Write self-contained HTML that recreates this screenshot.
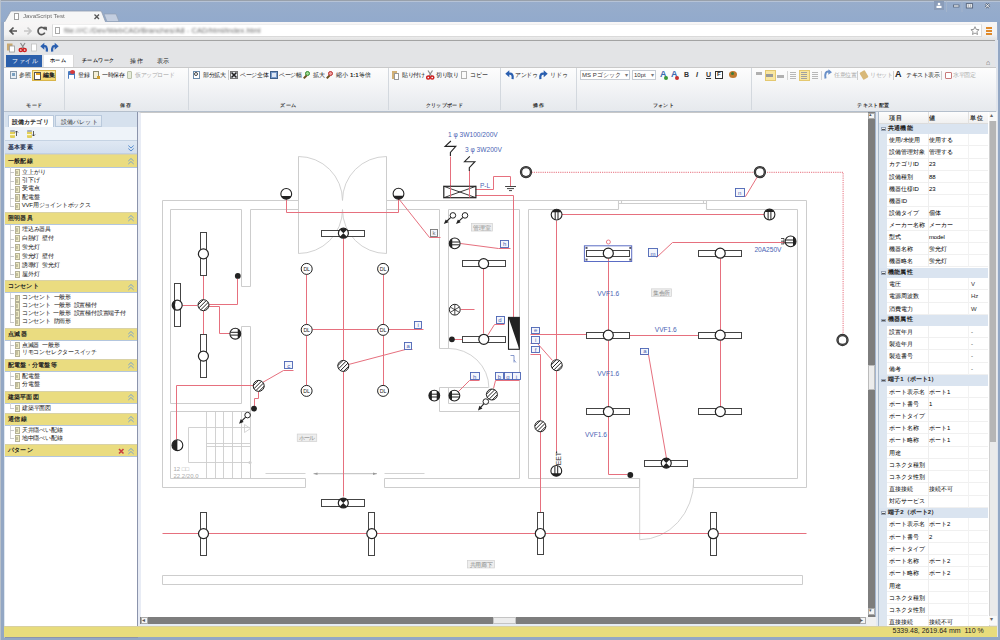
<!DOCTYPE html><html><head><meta charset="utf-8"><style>
html,body{margin:0;padding:0;width:1000px;height:640px;overflow:hidden;background:#fff;}
body{position:relative;font-family:"Liberation Sans", sans-serif;}
div{box-sizing:border-box;}
</style></head><body>
<div style="position:absolute;left:0px;top:0px;width:1000px;height:640px;background:linear-gradient(#98adcb 0px,#92aacc 22px,#a3b5cf 40px,#a3b5cf 640px);"></div>
<div style="position:absolute;left:0px;top:0px;width:1000px;height:1px;background:#98a0aa;"></div>
<div style="position:absolute;left:0px;top:1px;width:1000px;height:1px;background:#b6c3d6;"></div>
<div style="position:absolute;left:0px;top:0px;width:1px;height:640px;background:#b8c0ca;"></div>
<div style="position:absolute;left:1px;top:22px;width:3px;height:618px;background:#93a7c4;"></div>
<div style="position:absolute;left:997.5px;top:22px;width:2.5px;height:618px;background:#93a7c4;"></div>
<div style="position:absolute;left:1px;top:637px;width:999px;height:3px;background:#93a7c4;"></div>
<div style="position:absolute;left:933.6px;top:1px;width:10.8px;height:8.5px;background:#8a9cb8;"></div>
<svg style="position:absolute;left:920px;top:0" width="80" height="14"><circle cx="19" cy="4" r="1.3" fill="#fff"/><rect x="16.5" y="5.8" width="5" height="2.2" fill="#fff"/><path d="M26.5 1 V12 M42 1 V12" stroke="#a9b8cc" stroke-width="0.7"/><rect x="33.5" y="5" width="5.5" height="2" fill="#fff" stroke="#56647a" stroke-width="0.8"/><rect x="46.3" y="3.6" width="6.3" height="4.4" fill="#e6eaf0" stroke="#56647a" stroke-width="0.9"/><path d="M48.3 4.5 V7.3 M50.6 4.5 V7.3" stroke="#888" stroke-width="0.6"/><path d="M65.5 3.8 L69.5 7.8 M69.5 3.8 L65.5 7.8" stroke="#56647a" stroke-width="2.2"/><path d="M65.5 3.8 L69.5 7.8 M69.5 3.8 L65.5 7.8" stroke="#fff" stroke-width="1"/></svg>
<svg style="position:absolute;left:0;top:0" width="130" height="24"><path d="M4 23 L10.5 11.5 Q11 11 12 11 L100 11 Q101 11 101.5 11.5 L106 23 Z" fill="#f6f6f6" stroke="#8f9cb0" stroke-width="0.8"/><path d="M104 14 L116 14 L119 21.5 L107 21.5 Z" fill="#c3cee0" stroke="#8f9cb0" stroke-width="0.6"/></svg>
<div style="position:absolute;left:14px;top:13px;width:5px;height:7px;border:1px solid #a0a0a0;background:#fff;"></div>
<div style="position:absolute;left:23px;top:12.3px;font-size:6.2px;line-height:8.2px;color:#6a6a6a;white-space:nowrap;filter:blur(0.7px);">JavaScript Test</div>
<svg style="position:absolute;left:93px;top:13px" width="8" height="8"><path d="M1.5 1.5 L6 6 M6 1.5 L1.5 6" stroke="#555" stroke-width="1.3"/></svg>
<div style="position:absolute;left:4px;top:22px;width:993.3px;height:18px;background:linear-gradient(#f8f6f6,#f2f2f2 70%,#e2e2e2);"></div>
<div style="position:absolute;left:4px;top:39.5px;width:992px;height:1.2px;background:#a3a3a3;"></div>
<svg style="position:absolute;left:0;top:22px" width="50" height="18"><path d="M10 9 H17 M13.5 5.5 L10 9 L13.5 12.5" fill="none" stroke="#555" stroke-width="1.7"/><path d="M24 9 H31 M27.5 5.5 L31 9 L27.5 12.5" fill="none" stroke="#c6c6c6" stroke-width="1.7"/><path d="M44.8 7.3 A3.6 3.6 0 1 0 44.8 10.7" fill="none" stroke="#555" stroke-width="1.7"/><path d="M43.5 5.2 L46.5 5.2 L46.5 8.2 Z" fill="#555" stroke="#555" stroke-width="0.8"/></svg>
<div style="position:absolute;left:52px;top:24.3px;width:930px;height:12.7px;background:#fff;border:1px solid #dadada;border-top-color:#eee;"></div>
<div style="position:absolute;left:55px;top:27px;width:5px;height:7px;border:1px solid #a8a8a8;background:#fff;"></div>
<div style="position:absolute;left:64px;top:25.5px;font-size:7.4px;line-height:9.4px;color:#6a6a6a;white-space:nowrap;filter:blur(1.1px);letter-spacing:0.1px;">file:///C:/Dev/WebCAD/Branches/A8 - CAD/html/index.html</div>
<svg style="position:absolute;left:969.7px;top:26px" width="10" height="10"><polygon points="5.00,0.70 6.18,3.38 9.09,3.67 6.90,5.62 7.53,8.48 5.00,7.00 2.47,8.48 3.10,5.62 0.91,3.67 3.82,3.38" fill="#fff" stroke="#8a8a8a" stroke-width="0.9"/></svg>
<div style="position:absolute;left:986px;top:27px;width:6px;height:2px;background:#e08a2a;"></div>
<div style="position:absolute;left:986px;top:30px;width:6px;height:2px;background:#e08a2a;"></div>
<div style="position:absolute;left:986px;top:33px;width:6px;height:2px;background:#e08a2a;"></div>
<div style="position:absolute;left:995px;top:40px;width:2.5px;height:597px;background:#dfe4ec;"></div>
<div style="position:absolute;left:4px;top:40.5px;width:991px;height:26px;background:#e3e4e6;"></div>
<svg style="position:absolute;left:0;top:38px" width="70" height="18"><rect x="7" y="5.5" width="5.5" height="7" fill="#c9a870"/><rect x="9.5" y="8" width="5" height="6" fill="#fff" stroke="#9a9a9a" stroke-width="0.8"/><path d="M20.5 5 L24 10.5 M25 5 L21.5 10.5" stroke="#8a8a8a" stroke-width="1.2"/><circle cx="20.8" cy="12" r="1.6" fill="none" stroke="#d02020" stroke-width="1.5"/><circle cx="24.6" cy="12" r="1.6" fill="none" stroke="#d02020" stroke-width="1.5"/><rect x="31.5" y="6" width="5" height="7" fill="#fff" stroke="#c0c0c0" stroke-width="0.8"/><path d="M43.5 8.3 Q47.5 7 46.8 13.7" fill="none" stroke="#2a5fb0" stroke-width="2.2"/><path d="M40.3 8.3 L44.3 4.8 L44.3 11.8 Z" fill="#2a5fb0"/><path d="M55.5 8.3 Q51.5 7 52.2 13.7" fill="none" stroke="#2a5fb0" stroke-width="2.2"/><path d="M58.7 8.3 L54.7 4.8 L54.7 11.8 Z" fill="#2a5fb0"/></svg>
<div style="position:absolute;left:6px;top:55px;width:36px;height:11.5px;background:#2b5fab;"></div>
<div class="j" style="position:absolute;left:12px;top:56.5px;font-size:6px;line-height:8px;color:#fff;white-space:nowrap;letter-spacing:0.5px;width:26.5px;text-align:justify;text-align-last:justify;">ファイル</div>
<div style="position:absolute;left:43.5px;top:55px;width:30px;height:12px;background:#fff;border-right:1px solid #d8d8d8;"></div>
<div class="j" style="position:absolute;left:50px;top:56.5px;font-size:5px;line-height:7px;color:#111;white-space:nowrap;letter-spacing:0.2px;font-weight:bold;width:16.1px;text-align:justify;text-align-last:justify;">ホーム</div>
<div class="j" style="position:absolute;left:82px;top:56.5px;font-size:5px;line-height:7px;color:#111;white-space:nowrap;letter-spacing:0.35px;font-weight:bold;width:32.6px;text-align:justify;text-align-last:justify;">チームワーク</div>
<div class="j" style="position:absolute;left:130px;top:56.5px;font-size:6px;line-height:8px;color:#111;white-space:nowrap;width:12.5px;text-align:justify;text-align-last:justify;">操作</div>
<div class="j" style="position:absolute;left:156.5px;top:56.5px;font-size:6px;line-height:8px;color:#111;white-space:nowrap;letter-spacing:-0.5px;width:11.5px;text-align:justify;text-align-last:justify;">表示</div>
<div style="position:absolute;left:986px;top:58px;font-size:7px;line-height:9px;color:#666;white-space:nowrap;">⌂</div>
<div style="position:absolute;left:4px;top:66.5px;width:991.5px;height:45px;background:linear-gradient(#fdfdfd 0%,#f3f4f6 45%,#e6e9ed 100%);border-top:1px solid #c9c9c9;border-bottom:1px solid #b4bfcc;"></div>
<div style="position:absolute;left:63.5px;top:68px;width:1px;height:42px;background:#d3d8de;"></div>
<div style="position:absolute;left:187.5px;top:68px;width:1px;height:42px;background:#d3d8de;"></div>
<div style="position:absolute;left:387.5px;top:68px;width:1px;height:42px;background:#d3d8de;"></div>
<div style="position:absolute;left:500px;top:68px;width:1px;height:42px;background:#d3d8de;"></div>
<div style="position:absolute;left:576px;top:68px;width:1px;height:42px;background:#d3d8de;"></div>
<div style="position:absolute;left:750.5px;top:68px;width:1px;height:42px;background:#d3d8de;"></div>
<div class="j" style="position:absolute;left:26.125px;top:101.5px;font-size:5px;line-height:7px;color:#333;white-space:nowrap;;font-weight:bold;letter-spacing:0.25px;width:16.2px;text-align:justify;text-align-last:justify;">モード</div>
<div class="j" style="position:absolute;left:119.75px;top:101.5px;font-size:5px;line-height:7px;color:#333;white-space:nowrap;;font-weight:bold;letter-spacing:0.25px;width:11.0px;text-align:justify;text-align-last:justify;">保存</div>
<div class="j" style="position:absolute;left:280.125px;top:101.5px;font-size:5px;line-height:7px;color:#333;white-space:nowrap;;font-weight:bold;letter-spacing:0.25px;width:16.2px;text-align:justify;text-align-last:justify;">ズーム</div>
<div class="j" style="position:absolute;left:425.625px;top:101.5px;font-size:5px;line-height:7px;color:#333;white-space:nowrap;;font-weight:bold;letter-spacing:0.25px;width:37.2px;text-align:justify;text-align-last:justify;">クリップボード</div>
<div class="j" style="position:absolute;left:532.75px;top:101.5px;font-size:5px;line-height:7px;color:#333;white-space:nowrap;;font-weight:bold;letter-spacing:0.25px;width:11.0px;text-align:justify;text-align-last:justify;">操作</div>
<div class="j" style="position:absolute;left:652.5px;top:101.5px;font-size:5px;line-height:7px;color:#333;white-space:nowrap;;font-weight:bold;letter-spacing:0.25px;width:21.5px;text-align:justify;text-align-last:justify;">フォント</div>
<div class="j" style="position:absolute;left:857.25px;top:101.5px;font-size:5px;line-height:7px;color:#333;white-space:nowrap;;font-weight:bold;letter-spacing:0.25px;width:32.0px;text-align:justify;text-align-last:justify;">テキスト配置</div>
<div style="position:absolute;left:10px;top:71px;width:7px;height:8px;background:#e8eef4;border:1px solid #8a9aaa;"></div>
<div style="position:absolute;left:12px;top:73px;width:3px;height:3px;background:#7aa0c0;"></div>
<div class="j" style="position:absolute;left:19px;top:70.5px;font-size:6px;line-height:8px;color:#111;white-space:nowrap;letter-spacing:-0.5px;width:11.5px;text-align:justify;text-align-last:justify;">参照</div>
<div style="position:absolute;left:32px;top:70px;width:24px;height:11px;background:linear-gradient(#fbe9a0,#f2d56a);border:1px solid #d9b54a;"></div>
<div style="position:absolute;left:34px;top:71.5px;width:7px;height:8px;background:#fff;border:1px solid #555;"></div>
<div style="position:absolute;left:36px;top:73px;width:4px;height:2px;background:#e0a020;"></div>
<div class="j" style="position:absolute;left:43px;top:70.5px;font-size:6px;line-height:8px;color:#222;white-space:nowrap;letter-spacing:-0.5px;font-weight:bold;width:11.5px;text-align:justify;text-align-last:justify;">編集</div>
<div style="position:absolute;left:68px;top:71px;width:7px;height:8px;background:#4a7bc0;border-radius:1px;"></div>
<div style="position:absolute;left:70px;top:70px;width:5px;height:4px;background:#d83a3a;border-radius:50%;"></div>
<div style="position:absolute;left:69px;top:75px;width:5px;height:4px;background:#fff;"></div>
<div class="j" style="position:absolute;left:78px;top:70.5px;font-size:6px;line-height:8px;color:#111;white-space:nowrap;letter-spacing:-0.5px;width:11.5px;text-align:justify;text-align-last:justify;">登録</div>
<div style="position:absolute;left:93px;top:71px;width:6px;height:8px;background:#f5f0d8;border:1px solid #8a8a70;"></div>
<div style="position:absolute;left:97px;top:76px;width:3px;height:3px;background:#d0a030;"></div>
<div class="j" style="position:absolute;left:102px;top:70.5px;font-size:6px;line-height:8px;color:#111;white-space:nowrap;letter-spacing:-0.5px;width:22.5px;text-align:justify;text-align-last:justify;">一時保存</div>
<div style="position:absolute;left:127px;top:71px;width:5px;height:8px;background:#e6ecd8;border:1px solid #b8c0a8;border-radius:1px;"></div>
<div class="j" style="position:absolute;left:135px;top:70.5px;font-size:6px;line-height:8px;color:#a8a8a8;white-space:nowrap;letter-spacing:-0.5px;width:39.0px;text-align:justify;text-align-last:justify;">仮アップロード</div>
<div style="position:absolute;left:193px;top:71px;width:7px;height:8px;background:#fff;border:1px solid #6a8aaa;"></div>
<div style="position:absolute;left:194px;top:72px;width:4px;height:4px;border:1px solid #444;border-radius:50%;"></div>
<div class="j" style="position:absolute;left:203px;top:70.5px;font-size:6px;line-height:8px;color:#111;white-space:nowrap;letter-spacing:-0.5px;width:22.5px;text-align:justify;text-align-last:justify;">部分拡大</div>
<div style="position:absolute;left:228px;top:70px;width:0.8px;height:10px;background:#c8c8c8;"></div>
<div style="position:absolute;left:230px;top:71px;width:8px;height:8px;background:#e6e9ee;border:1px solid #777;"></div>
<svg style="position:absolute;left:230px;top:71px" width="8" height="8"><path d="M1.5 1.5 L6.5 6.5 M6.5 1.5 L1.5 6.5" stroke="#222" stroke-width="1.6"/></svg>
<div class="j" style="position:absolute;left:240px;top:70.5px;font-size:6px;line-height:8px;color:#111;white-space:nowrap;letter-spacing:-0.5px;width:28.0px;text-align:justify;text-align-last:justify;">ページ全体</div>
<div style="position:absolute;left:270px;top:71px;width:8px;height:8px;background:#7b9ccc;border:1px solid #40608a;"></div>
<div style="position:absolute;left:272px;top:73px;width:4px;height:4px;background:#dfe8f5;"></div>
<div class="j" style="position:absolute;left:279px;top:70.5px;font-size:6px;line-height:8px;color:#111;white-space:nowrap;letter-spacing:-0.5px;width:22.5px;text-align:justify;text-align-last:justify;">ページ幅</div>
<div style="position:absolute;left:305px;top:71px;width:5px;height:5px;border:1.5px solid #2f8a2f;border-radius:50%;background:#9fd88f;"></div>
<div style="position:absolute;left:303px;top:76px;width:4px;height:1.5px;background:#6a5020;transform:rotate(-45deg);"></div>
<div class="j" style="position:absolute;left:313px;top:70.5px;font-size:6px;line-height:8px;color:#111;white-space:nowrap;letter-spacing:-0.5px;width:11.5px;text-align:justify;text-align-last:justify;">拡大</div>
<div style="position:absolute;left:328px;top:71px;width:5px;height:5px;border:1.5px solid #b82a2a;border-radius:50%;background:#f0a0a0;"></div>
<div style="position:absolute;left:326px;top:76px;width:4px;height:1.5px;background:#6a5020;transform:rotate(-45deg);"></div>
<div class="j" style="position:absolute;left:336px;top:70.5px;font-size:6px;line-height:8px;color:#111;white-space:nowrap;letter-spacing:-0.5px;width:11.5px;text-align:justify;text-align-last:justify;">縮小</div>
<div style="position:absolute;left:350px;top:71px;font-size:6px;line-height:8px;color:#222;white-space:nowrap;font-weight:bold;">1:1</div>
<div class="j" style="position:absolute;left:359px;top:70.5px;font-size:6px;line-height:8px;color:#111;white-space:nowrap;letter-spacing:-0.5px;width:11.5px;text-align:justify;text-align-last:justify;">等倍</div>
<div style="position:absolute;left:392px;top:71px;width:5px;height:8px;background:#d2b176;"></div>
<div style="position:absolute;left:394px;top:73px;width:5px;height:7px;background:#fff;border:1px solid #999;"></div>
<div class="j" style="position:absolute;left:402px;top:70.5px;font-size:6px;line-height:8px;color:#111;white-space:nowrap;letter-spacing:-0.5px;width:22.5px;text-align:justify;text-align-last:justify;">貼り付け</div>
<svg style="position:absolute;left:426px;top:70px" width="9" height="10"><path d="M2 0.5 L5.5 6 M6.5 0.5 L3 6" stroke="#8a8a8a" stroke-width="1.2"/><circle cx="2.3" cy="7.5" r="1.6" fill="none" stroke="#d02020" stroke-width="1.5"/><circle cx="6.2" cy="7.5" r="1.6" fill="none" stroke="#d02020" stroke-width="1.5"/></svg>
<div class="j" style="position:absolute;left:436px;top:70.5px;font-size:6px;line-height:8px;color:#111;white-space:nowrap;letter-spacing:-0.5px;width:22.5px;text-align:justify;text-align-last:justify;">切り取り</div>
<div style="position:absolute;left:461px;top:71px;width:6px;height:8px;background:#fafafa;border:1px solid #b0b0b0;"></div>
<div class="j" style="position:absolute;left:470px;top:70.5px;font-size:6px;line-height:8px;color:#111;white-space:nowrap;letter-spacing:-0.5px;width:17.0px;text-align:justify;text-align-last:justify;">コピー</div>
<svg style="position:absolute;left:500px;top:68px" width="15" height="13"><path d="M8.5 5.8 Q13.5 4.5 12.6 11.2" fill="none" stroke="#2a5fb0" stroke-width="2.2"/><path d="M5.3 5.8 L9.3 2.3 L9.3 9.3 Z" fill="#2a5fb0"/></svg>
<div class="j" style="position:absolute;left:515px;top:70.5px;font-size:6px;line-height:8px;color:#111;white-space:nowrap;letter-spacing:-0.5px;width:22.5px;text-align:justify;text-align-last:justify;">アンドゥ</div>
<svg style="position:absolute;left:537px;top:68px" width="15" height="13"><path d="M7.5 5.8 Q2.5 4.5 3.4 11.2" fill="none" stroke="#2a5fb0" stroke-width="2.2"/><path d="M10.7 5.8 L6.7 2.3 L6.7 9.3 Z" fill="#2a5fb0"/></svg>
<div class="j" style="position:absolute;left:550px;top:70.5px;font-size:6px;line-height:8px;color:#111;white-space:nowrap;letter-spacing:-0.5px;width:17.0px;text-align:justify;text-align-last:justify;">リドゥ</div>
<div style="position:absolute;left:580px;top:70px;width:50px;height:10px;background:#fff;border:1px solid #c6ccd4;"></div>
<div class="j" style="position:absolute;left:582px;top:71px;font-size:6px;line-height:8px;color:#333;white-space:nowrap;width:39.2px;text-align:justify;text-align-last:justify;">MS Pゴシック</div>
<div style="position:absolute;left:625px;top:71px;font-size:6px;line-height:8px;color:#777;white-space:nowrap;">▾</div>
<div style="position:absolute;left:632px;top:70px;width:24px;height:10px;background:#fff;border:1px solid #c6ccd4;"></div>
<div style="position:absolute;left:634px;top:71px;font-size:6px;line-height:8px;color:#333;white-space:nowrap;">10pt</div>
<div style="position:absolute;left:651px;top:71px;font-size:6px;line-height:8px;color:#777;white-space:nowrap;">▾</div>
<div style="position:absolute;left:660px;top:69px;font-size:9px;line-height:11px;color:#3c6ab0;white-space:nowrap;font-weight:bold;">A</div>
<div style="position:absolute;left:664px;top:76px;width:4px;height:4px;background:#3a9a3a;border-radius:50%;"></div>
<div style="position:absolute;left:671px;top:69px;font-size:9px;line-height:11px;color:#3c6ab0;white-space:nowrap;font-weight:bold;">A</div>
<div style="position:absolute;left:675px;top:76px;width:4px;height:4px;background:#c83030;border-radius:50%;"></div>
<div style="position:absolute;left:684px;top:70px;font-size:7px;line-height:9px;color:#333;white-space:nowrap;font-weight:bold;">B</div>
<div style="position:absolute;left:696px;top:70px;font-size:7px;line-height:9px;color:#333;white-space:nowrap;font-style:italic;font-weight:bold;">I</div>
<div style="position:absolute;left:706px;top:70px;font-size:7px;line-height:9px;color:#333;white-space:nowrap;text-decoration:underline;font-weight:bold;">U</div>
<div style="position:absolute;left:715px;top:71px;width:8px;height:8px;border:1.2px solid #333;background:#fff;"></div>
<div style="position:absolute;left:717px;top:70px;font-size:6px;line-height:8px;color:#333;white-space:nowrap;font-weight:bold;">F</div>
<div style="position:absolute;left:729px;top:71px;width:8px;height:7px;background:#c07a30;border-radius:50%;"></div>
<div style="position:absolute;left:731px;top:72px;width:3px;height:3px;background:#3a7a3a;border-radius:50%;"></div>
<div style="position:absolute;left:756px;top:72px;width:6px;height:3px;background:#b0b0b0;"></div>
<div style="position:absolute;left:764.5px;top:70px;width:11px;height:10.5px;background:#f8e6a0;border:1px solid #e4c870;"></div>
<div style="position:absolute;left:766px;top:74px;width:7px;height:3px;background:#9a9a9a;"></div>
<div style="position:absolute;left:777px;top:75px;width:6.5px;height:3px;background:#b0b0b0;"></div>
<div style="position:absolute;left:787px;top:71px;width:0.8px;height:9px;background:#d4d4d4;"></div>
<div style="position:absolute;left:790px;top:72px;width:6px;height:7px;background:repeating-linear-gradient(#b8b8b8 0 1px,transparent 1px 2px);"></div>
<div style="position:absolute;left:798.5px;top:70px;width:11px;height:10.5px;background:#f8e6a0;border:1px solid #e4c870;"></div>
<div style="position:absolute;left:801px;top:72px;width:6px;height:7px;background:repeating-linear-gradient(#a0a0a0 0 1px,transparent 1px 2px);"></div>
<div style="position:absolute;left:812px;top:72px;width:6px;height:7px;background:repeating-linear-gradient(#b8b8b8 0 1px,transparent 1px 2px);"></div>
<div style="position:absolute;left:821px;top:71px;width:0.8px;height:9px;background:#d4d4d4;"></div>
<svg style="position:absolute;left:821px;top:68px" width="14" height="12"><path d="M4.5 10.5 C3.5 5.5 5 3 8 3.7 L9 4" fill="none" stroke="#6a90c8" stroke-width="2"/><path d="M11 4.3 L7.5 1.3 L7.2 6.7 Z" fill="#6a90c8"/></svg>
<div class="j" style="position:absolute;left:834px;top:70.5px;font-size:6px;line-height:8px;color:#a0a0a0;white-space:nowrap;letter-spacing:-0.5px;width:22.5px;text-align:justify;text-align-last:justify;">任意位置</div>
<div style="position:absolute;left:857px;top:71px;width:0.8px;height:9px;background:#ccc;"></div>
<div style="position:absolute;left:861px;top:71px;width:6px;height:8px;background:#d8b878;transform:rotate(-30deg);border-radius:1px;"></div>
<div class="j" style="position:absolute;left:870px;top:70.5px;font-size:6px;line-height:8px;color:#a8a8a8;white-space:nowrap;letter-spacing:-0.5px;width:22.5px;text-align:justify;text-align-last:justify;">リセット</div>
<div style="position:absolute;left:893px;top:71px;width:0.8px;height:9px;background:#ccc;"></div>
<div style="position:absolute;left:895px;top:69px;font-size:9px;line-height:11px;color:#222;white-space:nowrap;font-weight:bold;font-family:"Liberation Serif",serif;">A</div>
<div class="j" style="position:absolute;left:906px;top:70.5px;font-size:6px;line-height:8px;color:#222;white-space:nowrap;letter-spacing:-0.5px;width:33.5px;text-align:justify;text-align-last:justify;">テキスト表示</div>
<div style="position:absolute;left:941px;top:71px;width:0.8px;height:9px;background:#ccc;"></div>
<div style="position:absolute;left:945px;top:72px;width:7px;height:7px;border:1px solid #c87a7a;border-radius:1px;background:#fff;"></div>
<div class="j" style="position:absolute;left:953px;top:70.5px;font-size:6px;line-height:8px;color:#a8a8a8;white-space:nowrap;letter-spacing:-0.5px;width:22.5px;text-align:justify;text-align-last:justify;">水平固定</div>
<div style="position:absolute;left:4px;top:111.5px;width:134px;height:526px;background:#fff;border:1px solid #8b94ac;border-top:none;border-left-color:#dfe7f0;"></div>
<div style="position:absolute;left:5px;top:112px;width:132px;height:15px;background:#d6e1ee;"></div>
<div style="position:absolute;left:8px;top:115px;width:45.5px;height:12.5px;background:#fff;border:1px solid #b9c9dc;border-bottom:none;"></div>
<div class="j" style="position:absolute;left:12px;top:117.5px;font-size:6px;line-height:8px;color:#222;white-space:nowrap;font-weight:bold;width:36.5px;text-align:justify;text-align-last:justify;">設備カテゴリ</div>
<div style="position:absolute;left:55px;top:115px;width:46.5px;height:12px;background:linear-gradient(#eaf0f7,#dde6f1);border:1px solid #b9c9dc;"></div>
<div class="j" style="position:absolute;left:61px;top:117.5px;font-size:6px;line-height:8px;color:#333;white-space:nowrap;width:36.5px;text-align:justify;text-align-last:justify;">設備パレット</div>
<div style="position:absolute;left:5px;top:127px;width:132px;height:13.5px;background:#eef3f9;border-bottom:1px solid #c5d3e3;"></div>
<svg style="position:absolute;left:0;top:0" width="40" height="140"><rect x="10" y="131" width="5" height="7" rx="1" fill="#e2cf5a"/><rect x="10" y="130" width="5" height="2" rx="1" fill="#a8aeb8"/><rect x="10" y="134" width="5" height="1.2" fill="#fff8d0"/><path d="M16.5 136 V131 M15 132.5 L16.5 131 L18 132.5" fill="none" stroke="#333" stroke-width="0.8"/></svg>
<svg style="position:absolute;left:0;top:0" width="40" height="140"><rect x="27" y="131" width="5" height="7" rx="1" fill="#e2cf5a"/><rect x="27" y="130" width="5" height="2" rx="1" fill="#a8aeb8"/><rect x="27" y="134" width="5" height="1.2" fill="#fff8d0"/><path d="M33.5 131 V136 M32 134.5 L33.5 136 L35 134.5" fill="none" stroke="#333" stroke-width="0.8"/></svg>
<div style="position:absolute;left:5px;top:140.5px;width:132px;height:13.5px;background:linear-gradient(#dfe8f3,#d3dfee);border-bottom:1px solid #c2d0e2;"></div>
<div class="j" style="position:absolute;left:8px;top:142.8px;font-size:6px;line-height:8px;color:#1e2e4e;white-space:nowrap;font-weight:bold;width:24.5px;text-align:justify;text-align-last:justify;">基本要素</div>
<svg style="position:absolute;left:127px;top:143.5px" width="8" height="8"><path d="M1.3 1.5 L4 4 L6.7 1.5 M1.3 4.5 L4 7 L6.7 4.5" fill="none" stroke="#5b8fd0" stroke-width="1"/></svg>
<div style="position:absolute;left:5px;top:154.4px;width:132px;height:13.2px;background:#eadc80;border-top:1px solid #d9d2a6;border-bottom:1px solid #b3c6de;"></div>
<div class="j" style="position:absolute;left:8px;top:156.70000000000002px;font-size:6px;line-height:8px;color:#222;white-space:nowrap;font-weight:bold;width:24.5px;text-align:justify;text-align-last:justify;">一般配線</div>
<svg style="position:absolute;left:127px;top:156.9px" width="8" height="8"><path d="M1.3 4 L4 1.5 L6.7 4 M1.3 7 L4 4.5 L6.7 7" fill="none" stroke="#7aa4cc" stroke-width="1"/></svg>
<div style="position:absolute;left:9.5px;top:167.0px;width:0.8px;height:39.400000000000006px;background:#d4d4d4;"></div>
<div style="position:absolute;left:9.5px;top:172.1px;width:4.5px;height:0.8px;background:#c8c8c8;"></div>
<div style="position:absolute;left:14.5px;top:168.9px;width:5.2px;height:7.2px;background:#eeebc4;border:1px solid #b4b196;"></div>
<div style="position:absolute;left:15.8px;top:170.7px;width:2.6px;height:3.4px;border:0.6px solid #c4c0a0;"></div>
<div class="j" style="position:absolute;left:21.8px;top:167.5px;font-size:6px;line-height:8px;color:#111;white-space:nowrap;letter-spacing:-0.25px;width:23.5px;text-align:justify;text-align-last:justify;">立上がり</div>
<div style="position:absolute;left:9.5px;top:180.575px;width:4.5px;height:0.8px;background:#c8c8c8;"></div>
<div style="position:absolute;left:14.5px;top:177.375px;width:5.2px;height:7.2px;background:#eeebc4;border:1px solid #b4b196;"></div>
<div style="position:absolute;left:15.8px;top:179.17499999999998px;width:2.6px;height:3.4px;border:0.6px solid #c4c0a0;"></div>
<div class="j" style="position:absolute;left:21.8px;top:175.975px;font-size:6px;line-height:8px;color:#111;white-space:nowrap;letter-spacing:-0.25px;width:17.8px;text-align:justify;text-align-last:justify;">引下げ</div>
<div style="position:absolute;left:9.5px;top:189.04999999999998px;width:4.5px;height:0.8px;background:#c8c8c8;"></div>
<div style="position:absolute;left:14.5px;top:185.85px;width:5.2px;height:7.2px;background:#eeebc4;border:1px solid #b4b196;"></div>
<div style="position:absolute;left:15.8px;top:187.64999999999998px;width:2.6px;height:3.4px;border:0.6px solid #c4c0a0;"></div>
<div class="j" style="position:absolute;left:21.8px;top:184.45px;font-size:6px;line-height:8px;color:#111;white-space:nowrap;letter-spacing:-0.25px;width:17.8px;text-align:justify;text-align-last:justify;">受電点</div>
<div style="position:absolute;left:9.5px;top:197.525px;width:4.5px;height:0.8px;background:#c8c8c8;"></div>
<div style="position:absolute;left:14.5px;top:194.32500000000002px;width:5.2px;height:7.2px;background:#eeebc4;border:1px solid #b4b196;"></div>
<div style="position:absolute;left:15.8px;top:196.125px;width:2.6px;height:3.4px;border:0.6px solid #c4c0a0;"></div>
<div class="j" style="position:absolute;left:21.8px;top:192.925px;font-size:6px;line-height:8px;color:#111;white-space:nowrap;letter-spacing:-0.25px;width:17.8px;text-align:justify;text-align-last:justify;">配電盤</div>
<div style="position:absolute;left:9.5px;top:206.0px;width:4.5px;height:0.8px;background:#c8c8c8;"></div>
<div style="position:absolute;left:14.5px;top:202.8px;width:5.2px;height:7.2px;background:#eeebc4;border:1px solid #b4b196;"></div>
<div style="position:absolute;left:15.8px;top:204.6px;width:2.6px;height:3.4px;border:0.6px solid #c4c0a0;"></div>
<div class="j" style="position:absolute;left:21.8px;top:201.4px;font-size:6px;line-height:8px;color:#111;white-space:nowrap;letter-spacing:-0.25px;width:68.9px;text-align:justify;text-align-last:justify;">VVF用ジョイントボックス</div>
<div style="position:absolute;left:5px;top:211.9px;width:132px;height:13.2px;background:#eadc80;border-top:1px solid #d9d2a6;border-bottom:1px solid #b3c6de;"></div>
<div class="j" style="position:absolute;left:8px;top:214.20000000000002px;font-size:6px;line-height:8px;color:#222;white-space:nowrap;font-weight:bold;width:24.5px;text-align:justify;text-align-last:justify;">照明器具</div>
<svg style="position:absolute;left:127px;top:214.4px" width="8" height="8"><path d="M1.3 4 L4 1.5 L6.7 4 M1.3 7 L4 4.5 L6.7 7" fill="none" stroke="#7aa4cc" stroke-width="1"/></svg>
<div style="position:absolute;left:9.5px;top:224.5px;width:0.8px;height:50.0px;background:#d4d4d4;"></div>
<div style="position:absolute;left:9.5px;top:229.6px;width:4.5px;height:0.8px;background:#c8c8c8;"></div>
<div style="position:absolute;left:14.5px;top:226.4px;width:5.2px;height:7.2px;background:#eeebc4;border:1px solid #b4b196;"></div>
<div style="position:absolute;left:15.8px;top:228.2px;width:2.6px;height:3.4px;border:0.6px solid #c4c0a0;"></div>
<div class="j" style="position:absolute;left:21.8px;top:225.0px;font-size:6px;line-height:8px;color:#111;white-space:nowrap;letter-spacing:-0.25px;width:29.2px;text-align:justify;text-align-last:justify;">埋込み器具</div>
<div style="position:absolute;left:9.5px;top:238.5px;width:4.5px;height:0.8px;background:#c8c8c8;"></div>
<div style="position:absolute;left:14.5px;top:235.3px;width:5.2px;height:7.2px;background:#eeebc4;border:1px solid #b4b196;"></div>
<div style="position:absolute;left:15.8px;top:237.1px;width:2.6px;height:3.4px;border:0.6px solid #c4c0a0;"></div>
<div class="j" style="position:absolute;left:21.8px;top:233.9px;font-size:6px;line-height:8px;color:#111;white-space:nowrap;letter-spacing:-0.25px;width:32.0px;text-align:justify;text-align-last:justify;">白熱灯 壁付</div>
<div style="position:absolute;left:9.5px;top:247.4px;width:4.5px;height:0.8px;background:#c8c8c8;"></div>
<div style="position:absolute;left:14.5px;top:244.20000000000002px;width:5.2px;height:7.2px;background:#eeebc4;border:1px solid #b4b196;"></div>
<div style="position:absolute;left:15.8px;top:246.0px;width:2.6px;height:3.4px;border:0.6px solid #c4c0a0;"></div>
<div class="j" style="position:absolute;left:21.8px;top:242.8px;font-size:6px;line-height:8px;color:#111;white-space:nowrap;letter-spacing:-0.25px;width:17.8px;text-align:justify;text-align-last:justify;">蛍光灯</div>
<div style="position:absolute;left:9.5px;top:256.3px;width:4.5px;height:0.8px;background:#c8c8c8;"></div>
<div style="position:absolute;left:14.5px;top:253.1px;width:5.2px;height:7.2px;background:#eeebc4;border:1px solid #b4b196;"></div>
<div style="position:absolute;left:15.8px;top:254.89999999999998px;width:2.6px;height:3.4px;border:0.6px solid #c4c0a0;"></div>
<div class="j" style="position:absolute;left:21.8px;top:251.7px;font-size:6px;line-height:8px;color:#111;white-space:nowrap;letter-spacing:-0.25px;width:32.0px;text-align:justify;text-align-last:justify;">蛍光灯 壁付</div>
<div style="position:absolute;left:9.5px;top:265.20000000000005px;width:4.5px;height:0.8px;background:#c8c8c8;"></div>
<div style="position:absolute;left:14.5px;top:262.0px;width:5.2px;height:7.2px;background:#eeebc4;border:1px solid #b4b196;"></div>
<div style="position:absolute;left:15.8px;top:263.8px;width:2.6px;height:3.4px;border:0.6px solid #c4c0a0;"></div>
<div class="j" style="position:absolute;left:21.8px;top:260.6px;font-size:6px;line-height:8px;color:#111;white-space:nowrap;letter-spacing:-0.25px;width:37.8px;text-align:justify;text-align-last:justify;">誘導灯 蛍光灯</div>
<div style="position:absolute;left:9.5px;top:274.1px;width:4.5px;height:0.8px;background:#c8c8c8;"></div>
<div style="position:absolute;left:14.5px;top:270.9px;width:5.2px;height:7.2px;background:#eeebc4;border:1px solid #b4b196;"></div>
<div style="position:absolute;left:15.8px;top:272.7px;width:2.6px;height:3.4px;border:0.6px solid #c4c0a0;"></div>
<div class="j" style="position:absolute;left:21.8px;top:269.5px;font-size:6px;line-height:8px;color:#111;white-space:nowrap;letter-spacing:-0.25px;width:17.8px;text-align:justify;text-align-last:justify;">屋外灯</div>
<div style="position:absolute;left:5px;top:280.0px;width:132px;height:13.2px;background:#eadc80;border-top:1px solid #d9d2a6;border-bottom:1px solid #b3c6de;"></div>
<div class="j" style="position:absolute;left:8px;top:282.3px;font-size:6px;line-height:8px;color:#222;white-space:nowrap;font-weight:bold;width:30.5px;text-align:justify;text-align-last:justify;">コンセント</div>
<svg style="position:absolute;left:127px;top:282.5px" width="8" height="8"><path d="M1.3 4 L4 1.5 L6.7 4 M1.3 7 L4 4.5 L6.7 7" fill="none" stroke="#7aa4cc" stroke-width="1"/></svg>
<div style="position:absolute;left:9.5px;top:292.6px;width:0.8px;height:29.399999999999977px;background:#d4d4d4;"></div>
<div style="position:absolute;left:9.5px;top:297.70000000000005px;width:4.5px;height:0.8px;background:#c8c8c8;"></div>
<div style="position:absolute;left:14.5px;top:294.5px;width:5.2px;height:7.2px;background:#eeebc4;border:1px solid #b4b196;"></div>
<div style="position:absolute;left:15.8px;top:296.3px;width:2.6px;height:3.4px;border:0.6px solid #c4c0a0;"></div>
<div class="j" style="position:absolute;left:21.8px;top:293.1px;font-size:6px;line-height:8px;color:#111;white-space:nowrap;letter-spacing:-0.25px;width:49.2px;text-align:justify;text-align-last:justify;">コンセント 一般形</div>
<div style="position:absolute;left:9.5px;top:305.6666666666667px;width:4.5px;height:0.8px;background:#c8c8c8;"></div>
<div style="position:absolute;left:14.5px;top:302.46666666666664px;width:5.2px;height:7.2px;background:#eeebc4;border:1px solid #b4b196;"></div>
<div style="position:absolute;left:15.8px;top:304.26666666666665px;width:2.6px;height:3.4px;border:0.6px solid #c4c0a0;"></div>
<div class="j" style="position:absolute;left:21.8px;top:301.06666666666666px;font-size:6px;line-height:8px;color:#111;white-space:nowrap;letter-spacing:-0.25px;width:75.0px;text-align:justify;text-align-last:justify;">コンセント 一般形 設置極付</div>
<div style="position:absolute;left:9.5px;top:313.6333333333334px;width:4.5px;height:0.8px;background:#c8c8c8;"></div>
<div style="position:absolute;left:14.5px;top:310.43333333333334px;width:5.2px;height:7.2px;background:#eeebc4;border:1px solid #b4b196;"></div>
<div style="position:absolute;left:15.8px;top:312.23333333333335px;width:2.6px;height:3.4px;border:0.6px solid #c4c0a0;"></div>
<div class="j" style="position:absolute;left:21.8px;top:309.03333333333336px;font-size:6px;line-height:8px;color:#111;white-space:nowrap;letter-spacing:-0.25px;width:103.8px;text-align:justify;text-align-last:justify;">コンセント 一般形 設置極付設置端子付</div>
<div style="position:absolute;left:9.5px;top:321.6px;width:4.5px;height:0.8px;background:#c8c8c8;"></div>
<div style="position:absolute;left:14.5px;top:318.4px;width:5.2px;height:7.2px;background:#eeebc4;border:1px solid #b4b196;"></div>
<div style="position:absolute;left:15.8px;top:320.2px;width:2.6px;height:3.4px;border:0.6px solid #c4c0a0;"></div>
<div class="j" style="position:absolute;left:21.8px;top:317.0px;font-size:6px;line-height:8px;color:#111;white-space:nowrap;letter-spacing:-0.25px;width:49.2px;text-align:justify;text-align-last:justify;">コンセント 防雨形</div>
<div style="position:absolute;left:5px;top:327.5px;width:132px;height:13.2px;background:#eadc80;border-top:1px solid #d9d2a6;border-bottom:1px solid #b3c6de;"></div>
<div class="j" style="position:absolute;left:8px;top:329.8px;font-size:6px;line-height:8px;color:#222;white-space:nowrap;font-weight:bold;width:18.5px;text-align:justify;text-align-last:justify;">点滅器</div>
<svg style="position:absolute;left:127px;top:330.0px" width="8" height="8"><path d="M1.3 4 L4 1.5 L6.7 4 M1.3 7 L4 4.5 L6.7 7" fill="none" stroke="#7aa4cc" stroke-width="1"/></svg>
<div style="position:absolute;left:9.5px;top:340.1px;width:0.8px;height:13.149999999999977px;background:#d4d4d4;"></div>
<div style="position:absolute;left:9.5px;top:345.20000000000005px;width:4.5px;height:0.8px;background:#c8c8c8;"></div>
<div style="position:absolute;left:14.5px;top:342.0px;width:5.2px;height:7.2px;background:#eeebc4;border:1px solid #b4b196;"></div>
<div style="position:absolute;left:15.8px;top:343.8px;width:2.6px;height:3.4px;border:0.6px solid #c4c0a0;"></div>
<div class="j" style="position:absolute;left:21.8px;top:340.6px;font-size:6px;line-height:8px;color:#111;white-space:nowrap;letter-spacing:-0.25px;width:37.8px;text-align:justify;text-align-last:justify;">点滅器 一般形</div>
<div style="position:absolute;left:9.5px;top:352.85px;width:4.5px;height:0.8px;background:#c8c8c8;"></div>
<div style="position:absolute;left:14.5px;top:349.65px;width:5.2px;height:7.2px;background:#eeebc4;border:1px solid #b4b196;"></div>
<div style="position:absolute;left:15.8px;top:351.45px;width:2.6px;height:3.4px;border:0.6px solid #c4c0a0;"></div>
<div class="j" style="position:absolute;left:21.8px;top:348.25px;font-size:6px;line-height:8px;color:#111;white-space:nowrap;letter-spacing:-0.25px;width:75.2px;text-align:justify;text-align-last:justify;">リモコンセレクタースイッチ</div>
<div style="position:absolute;left:5px;top:358.75px;width:132px;height:13.2px;background:#eadc80;border-top:1px solid #d9d2a6;border-bottom:1px solid #b3c6de;"></div>
<div class="j" style="position:absolute;left:8px;top:361.05px;font-size:6px;line-height:8px;color:#222;white-space:nowrap;font-weight:bold;width:48.5px;text-align:justify;text-align-last:justify;">配電盤・分電盤等</div>
<svg style="position:absolute;left:127px;top:361.25px" width="8" height="8"><path d="M1.3 4 L4 1.5 L6.7 4 M1.3 7 L4 4.5 L6.7 7" fill="none" stroke="#7aa4cc" stroke-width="1"/></svg>
<div style="position:absolute;left:9.5px;top:371.35px;width:0.8px;height:13.75px;background:#d4d4d4;"></div>
<div style="position:absolute;left:9.5px;top:376.45000000000005px;width:4.5px;height:0.8px;background:#c8c8c8;"></div>
<div style="position:absolute;left:14.5px;top:373.25px;width:5.2px;height:7.2px;background:#eeebc4;border:1px solid #b4b196;"></div>
<div style="position:absolute;left:15.8px;top:375.05px;width:2.6px;height:3.4px;border:0.6px solid #c4c0a0;"></div>
<div class="j" style="position:absolute;left:21.8px;top:371.85px;font-size:6px;line-height:8px;color:#111;white-space:nowrap;letter-spacing:-0.25px;width:17.8px;text-align:justify;text-align-last:justify;">配電盤</div>
<div style="position:absolute;left:9.5px;top:384.70000000000005px;width:4.5px;height:0.8px;background:#c8c8c8;"></div>
<div style="position:absolute;left:14.5px;top:381.5px;width:5.2px;height:7.2px;background:#eeebc4;border:1px solid #b4b196;"></div>
<div style="position:absolute;left:15.8px;top:383.3px;width:2.6px;height:3.4px;border:0.6px solid #c4c0a0;"></div>
<div class="j" style="position:absolute;left:21.8px;top:380.1px;font-size:6px;line-height:8px;color:#111;white-space:nowrap;letter-spacing:-0.25px;width:17.8px;text-align:justify;text-align-last:justify;">分電盤</div>
<div style="position:absolute;left:5px;top:390.6px;width:132px;height:13.2px;background:#eadc80;border-top:1px solid #d9d2a6;border-bottom:1px solid #b3c6de;"></div>
<div class="j" style="position:absolute;left:8px;top:392.90000000000003px;font-size:6px;line-height:8px;color:#222;white-space:nowrap;font-weight:bold;width:30.5px;text-align:justify;text-align-last:justify;">建築平面図</div>
<svg style="position:absolute;left:127px;top:393.1px" width="8" height="8"><path d="M1.3 4 L4 1.5 L6.7 4 M1.3 7 L4 4.5 L6.7 7" fill="none" stroke="#7aa4cc" stroke-width="1"/></svg>
<div style="position:absolute;left:9.5px;top:403.20000000000005px;width:0.8px;height:5.5px;background:#d4d4d4;"></div>
<div style="position:absolute;left:9.5px;top:408.30000000000007px;width:4.5px;height:0.8px;background:#c8c8c8;"></div>
<div style="position:absolute;left:14.5px;top:405.1px;width:5.2px;height:7.2px;background:#eeebc4;border:1px solid #b4b196;"></div>
<div style="position:absolute;left:15.8px;top:406.90000000000003px;width:2.6px;height:3.4px;border:0.6px solid #c4c0a0;"></div>
<div class="j" style="position:absolute;left:21.8px;top:403.70000000000005px;font-size:6px;line-height:8px;color:#111;white-space:nowrap;letter-spacing:-0.25px;width:29.2px;text-align:justify;text-align-last:justify;">建築平面図</div>
<div style="position:absolute;left:5px;top:412.5px;width:132px;height:13.2px;background:#eadc80;border-top:1px solid #d9d2a6;border-bottom:1px solid #b3c6de;"></div>
<div class="j" style="position:absolute;left:8px;top:414.8px;font-size:6px;line-height:8px;color:#222;white-space:nowrap;font-weight:bold;width:18.5px;text-align:justify;text-align-last:justify;">通信線</div>
<svg style="position:absolute;left:127px;top:415.0px" width="8" height="8"><path d="M1.3 4 L4 1.5 L6.7 4 M1.3 7 L4 4.5 L6.7 7" fill="none" stroke="#7aa4cc" stroke-width="1"/></svg>
<div style="position:absolute;left:9.5px;top:425.1px;width:0.8px;height:13.399999999999977px;background:#d4d4d4;"></div>
<div style="position:absolute;left:9.5px;top:430.20000000000005px;width:4.5px;height:0.8px;background:#c8c8c8;"></div>
<div style="position:absolute;left:14.5px;top:427.0px;width:5.2px;height:7.2px;background:#eeebc4;border:1px solid #b4b196;"></div>
<div style="position:absolute;left:15.8px;top:428.8px;width:2.6px;height:3.4px;border:0.6px solid #c4c0a0;"></div>
<div class="j" style="position:absolute;left:21.8px;top:425.6px;font-size:6px;line-height:8px;color:#111;white-space:nowrap;letter-spacing:-0.25px;width:40.8px;text-align:justify;text-align-last:justify;">天井隠ぺい配線</div>
<div style="position:absolute;left:9.5px;top:438.1px;width:4.5px;height:0.8px;background:#c8c8c8;"></div>
<div style="position:absolute;left:14.5px;top:434.9px;width:5.2px;height:7.2px;background:#eeebc4;border:1px solid #b4b196;"></div>
<div style="position:absolute;left:15.8px;top:436.7px;width:2.6px;height:3.4px;border:0.6px solid #c4c0a0;"></div>
<div class="j" style="position:absolute;left:21.8px;top:433.5px;font-size:6px;line-height:8px;color:#111;white-space:nowrap;letter-spacing:-0.25px;width:40.8px;text-align:justify;text-align-last:justify;">地中隠ぺい配線</div>
<div style="position:absolute;left:5px;top:444.0px;width:132px;height:13.2px;background:#eadc80;border-top:1px solid #d9d2a6;border-bottom:1px solid #b3c6de;"></div>
<div class="j" style="position:absolute;left:8px;top:446.3px;font-size:6px;line-height:8px;color:#222;white-space:nowrap;font-weight:bold;width:24.5px;text-align:justify;text-align-last:justify;">パターン</div>
<svg style="position:absolute;left:127px;top:446.5px" width="8" height="8"><path d="M1.3 4 L4 1.5 L6.7 4 M1.3 7 L4 4.5 L6.7 7" fill="none" stroke="#7aa4cc" stroke-width="1"/></svg>
<svg style="position:absolute;left:118px;top:447.5px" width="7" height="7"><path d="M1 1 L5.5 5.5 M5.5 1 L1 5.5" stroke="#c84040" stroke-width="1.6"/></svg>
<div style="position:absolute;left:138px;top:111.5px;width:730px;height:514.5px;background:#fff;border-left:3px solid #e8ecf5;border-top:1px solid #c8c8c8;"></div>
<div style="position:absolute;left:868px;top:112px;width:7px;height:514px;background:#7d7d7d;"></div>
<div style="position:absolute;left:868px;top:112.5px;width:7px;height:6px;background:#f4f4f4;border:1px solid #aaa;"></div>
<div style="position:absolute;left:869px;top:111px;font-size:5px;line-height:7px;color:#555;white-space:nowrap;">▴</div>
<div style="position:absolute;left:868px;top:365px;width:7px;height:25px;background:#ececec;border:1px solid #bbb;"></div>
<div style="position:absolute;left:868px;top:608px;width:7px;height:7px;background:#f4f4f4;border:1px solid #aaa;"></div>
<div style="position:absolute;left:869px;top:607px;font-size:5px;line-height:7px;color:#555;white-space:nowrap;">▾</div>
<div style="position:absolute;left:140px;top:616.5px;width:726px;height:7.5px;background:#7d7d7d;"></div>
<div style="position:absolute;left:141px;top:617px;width:6.5px;height:6.5px;background:#f4f4f4;border:1px solid #aaa;"></div>
<div style="position:absolute;left:141.5px;top:616px;font-size:6px;line-height:8px;color:#555;white-space:nowrap;">◂</div>
<div style="position:absolute;left:859.5px;top:617px;width:6.5px;height:6.5px;background:#f4f4f4;border:1px solid #aaa;"></div>
<div style="position:absolute;left:860px;top:616px;font-size:6px;line-height:8px;color:#555;white-space:nowrap;">▸</div>
<div style="position:absolute;left:492.7px;top:616.6px;width:23.5px;height:7px;background:#ececec;border:1px solid #c4c4c4;"></div>
<div style="position:absolute;left:866px;top:616.5px;width:9.5px;height:9.5px;background:#f0f0f0;"></div>
<div style="position:absolute;left:139.5px;top:624px;width:727px;height:2px;background:#e6ecf4;"></div>
<div style="position:absolute;left:875.5px;top:111.5px;width:2.5px;height:515px;background:#e4eaf2;"></div>
<div style="position:absolute;left:878px;top:111.5px;width:110.5px;height:515px;background:#fff;border-left:1px solid #a9b9cc;"></div>
<div style="position:absolute;left:879px;top:112px;width:8px;height:514px;background:#dde6f0;"></div>
<div style="position:absolute;left:879px;top:112px;width:109px;height:12.4px;background:linear-gradient(#fdfdfd,#f0f0f0);border-bottom:1px solid #dcdcdc;"></div>
<div class="j" style="position:absolute;left:889px;top:113.5px;font-size:6px;line-height:8px;color:#333;white-space:nowrap;font-weight:bold;width:12.5px;text-align:justify;text-align-last:justify;">項目</div>
<div class="j" style="position:absolute;left:929px;top:113.5px;font-size:6px;line-height:8px;color:#333;white-space:nowrap;font-weight:bold;">値</div>
<div class="j" style="position:absolute;left:970px;top:113.5px;font-size:6px;line-height:8px;color:#333;white-space:nowrap;font-weight:bold;width:12.5px;text-align:justify;text-align-last:justify;">単位</div>
<div style="position:absolute;left:927.5px;top:112px;width:0.7px;height:12.4px;background:#e0e0e0;"></div>
<div style="position:absolute;left:967.5px;top:112px;width:0.7px;height:12.4px;background:#e0e0e0;"></div>
<div style="position:absolute;left:879px;top:123.75px;width:109px;height:10.6px;background:#dae4f0;"></div>
<div style="position:absolute;left:880.5px;top:127.25px;width:5.5px;height:3.5px;background:#e8edf3;border:0.7px solid #9aa6b8;"></div>
<div style="position:absolute;left:881.8px;top:128.75px;width:3px;height:0.7px;background:#555;"></div>
<div class="j" style="position:absolute;left:888px;top:123.95px;font-size:6px;line-height:8px;color:#222;white-space:nowrap;font-weight:bold;width:24.5px;text-align:justify;text-align-last:justify;">共通機能</div>
<div style="position:absolute;left:887px;top:134.35px;width:101px;height:12.104545454545455px;border-bottom:1px solid #f0f0f0;"></div>
<div style="position:absolute;left:927.5px;top:134.35px;width:0.7px;height:12.104545454545455px;background:#eeeeee;"></div>
<div style="position:absolute;left:967.5px;top:134.35px;width:0.7px;height:12.104545454545455px;background:#f2f2f2;"></div>
<div class="j" style="position:absolute;left:889px;top:136.20227272727274px;font-size:6px;line-height:8px;color:#000;white-space:nowrap;letter-spacing:-0.15px;width:31.3px;text-align:justify;text-align-last:justify;">使用/未使用</div>
<div class="j" style="position:absolute;left:929px;top:136.20227272727274px;font-size:6px;line-height:8px;color:#000;white-space:nowrap;letter-spacing:-0.15px;width:23.9px;text-align:justify;text-align-last:justify;">使用する</div>
<div style="position:absolute;left:887px;top:146.45454545454544px;width:101px;height:12.104545454545455px;border-bottom:1px solid #f0f0f0;"></div>
<div style="position:absolute;left:927.5px;top:146.45454545454544px;width:0.7px;height:12.104545454545455px;background:#eeeeee;"></div>
<div style="position:absolute;left:967.5px;top:146.45454545454544px;width:0.7px;height:12.104545454545455px;background:#f2f2f2;"></div>
<div class="j" style="position:absolute;left:889px;top:148.3068181818182px;font-size:6px;line-height:8px;color:#000;white-space:nowrap;letter-spacing:-0.15px;width:35.6px;text-align:justify;text-align-last:justify;">設備管理対象</div>
<div class="j" style="position:absolute;left:929px;top:148.3068181818182px;font-size:6px;line-height:8px;color:#000;white-space:nowrap;letter-spacing:-0.15px;width:23.9px;text-align:justify;text-align-last:justify;">管理する</div>
<div style="position:absolute;left:887px;top:158.5590909090909px;width:101px;height:12.104545454545455px;border-bottom:1px solid #f0f0f0;"></div>
<div style="position:absolute;left:927.5px;top:158.5590909090909px;width:0.7px;height:12.104545454545455px;background:#eeeeee;"></div>
<div style="position:absolute;left:967.5px;top:158.5590909090909px;width:0.7px;height:12.104545454545455px;background:#f2f2f2;"></div>
<div class="j" style="position:absolute;left:889px;top:160.41136363636366px;font-size:6px;line-height:8px;color:#000;white-space:nowrap;letter-spacing:-0.15px;width:29.6px;text-align:justify;text-align-last:justify;">カテゴリID</div>
<div style="position:absolute;left:929px;top:160.41136363636366px;font-size:6px;line-height:8px;color:#000;white-space:nowrap;letter-spacing:-0.15px;">23</div>
<div style="position:absolute;left:887px;top:170.66363636363636px;width:101px;height:12.104545454545455px;border-bottom:1px solid #f0f0f0;"></div>
<div style="position:absolute;left:927.5px;top:170.66363636363636px;width:0.7px;height:12.104545454545455px;background:#eeeeee;"></div>
<div style="position:absolute;left:967.5px;top:170.66363636363636px;width:0.7px;height:12.104545454545455px;background:#f2f2f2;"></div>
<div class="j" style="position:absolute;left:889px;top:172.5159090909091px;font-size:6px;line-height:8px;color:#000;white-space:nowrap;letter-spacing:-0.15px;width:23.9px;text-align:justify;text-align-last:justify;">設備種別</div>
<div style="position:absolute;left:929px;top:172.5159090909091px;font-size:6px;line-height:8px;color:#000;white-space:nowrap;letter-spacing:-0.15px;">88</div>
<div style="position:absolute;left:887px;top:182.7681818181818px;width:101px;height:12.104545454545455px;border-bottom:1px solid #f0f0f0;"></div>
<div style="position:absolute;left:927.5px;top:182.7681818181818px;width:0.7px;height:12.104545454545455px;background:#eeeeee;"></div>
<div style="position:absolute;left:967.5px;top:182.7681818181818px;width:0.7px;height:12.104545454545455px;background:#f2f2f2;"></div>
<div class="j" style="position:absolute;left:889px;top:184.62045454545455px;font-size:6px;line-height:8px;color:#000;white-space:nowrap;letter-spacing:-0.15px;width:29.6px;text-align:justify;text-align-last:justify;">機器仕様ID</div>
<div style="position:absolute;left:929px;top:184.62045454545455px;font-size:6px;line-height:8px;color:#000;white-space:nowrap;letter-spacing:-0.15px;">23</div>
<div style="position:absolute;left:887px;top:194.87272727272727px;width:101px;height:12.104545454545455px;border-bottom:1px solid #f0f0f0;"></div>
<div style="position:absolute;left:927.5px;top:194.87272727272727px;width:0.7px;height:12.104545454545455px;background:#eeeeee;"></div>
<div style="position:absolute;left:967.5px;top:194.87272727272727px;width:0.7px;height:12.104545454545455px;background:#f2f2f2;"></div>
<div class="j" style="position:absolute;left:889px;top:196.72500000000002px;font-size:6px;line-height:8px;color:#000;white-space:nowrap;letter-spacing:-0.15px;width:17.9px;text-align:justify;text-align-last:justify;">機器ID</div>
<div style="position:absolute;left:887px;top:206.97727272727272px;width:101px;height:12.104545454545455px;border-bottom:1px solid #f0f0f0;"></div>
<div style="position:absolute;left:927.5px;top:206.97727272727272px;width:0.7px;height:12.104545454545455px;background:#eeeeee;"></div>
<div style="position:absolute;left:967.5px;top:206.97727272727272px;width:0.7px;height:12.104545454545455px;background:#f2f2f2;"></div>
<div class="j" style="position:absolute;left:889px;top:208.82954545454547px;font-size:6px;line-height:8px;color:#000;white-space:nowrap;letter-spacing:-0.15px;width:29.8px;text-align:justify;text-align-last:justify;">設備タイプ</div>
<div class="j" style="position:absolute;left:929px;top:208.82954545454547px;font-size:6px;line-height:8px;color:#000;white-space:nowrap;letter-spacing:-0.15px;width:12.2px;text-align:justify;text-align-last:justify;">個体</div>
<div style="position:absolute;left:887px;top:219.08181818181816px;width:101px;height:12.104545454545455px;border-bottom:1px solid #f0f0f0;"></div>
<div style="position:absolute;left:927.5px;top:219.08181818181816px;width:0.7px;height:12.104545454545455px;background:#eeeeee;"></div>
<div style="position:absolute;left:967.5px;top:219.08181818181816px;width:0.7px;height:12.104545454545455px;background:#f2f2f2;"></div>
<div class="j" style="position:absolute;left:889px;top:220.9340909090909px;font-size:6px;line-height:8px;color:#000;white-space:nowrap;letter-spacing:-0.15px;width:35.6px;text-align:justify;text-align-last:justify;">メーカー名称</div>
<div class="j" style="position:absolute;left:929px;top:220.9340909090909px;font-size:6px;line-height:8px;color:#000;white-space:nowrap;letter-spacing:-0.15px;width:23.9px;text-align:justify;text-align-last:justify;">メーカー</div>
<div style="position:absolute;left:887px;top:231.18636363636364px;width:101px;height:12.104545454545455px;border-bottom:1px solid #f0f0f0;"></div>
<div style="position:absolute;left:927.5px;top:231.18636363636364px;width:0.7px;height:12.104545454545455px;background:#eeeeee;"></div>
<div style="position:absolute;left:967.5px;top:231.18636363636364px;width:0.7px;height:12.104545454545455px;background:#f2f2f2;"></div>
<div class="j" style="position:absolute;left:889px;top:233.03863636363639px;font-size:6px;line-height:8px;color:#000;white-space:nowrap;letter-spacing:-0.15px;width:12.2px;text-align:justify;text-align-last:justify;">型式</div>
<div style="position:absolute;left:929px;top:233.03863636363639px;font-size:6px;line-height:8px;color:#000;white-space:nowrap;letter-spacing:-0.15px;">model</div>
<div style="position:absolute;left:887px;top:243.2909090909091px;width:101px;height:12.104545454545455px;border-bottom:1px solid #f0f0f0;"></div>
<div style="position:absolute;left:927.5px;top:243.2909090909091px;width:0.7px;height:12.104545454545455px;background:#eeeeee;"></div>
<div style="position:absolute;left:967.5px;top:243.2909090909091px;width:0.7px;height:12.104545454545455px;background:#f2f2f2;"></div>
<div class="j" style="position:absolute;left:889px;top:245.14318181818186px;font-size:6px;line-height:8px;color:#000;white-space:nowrap;letter-spacing:-0.15px;width:23.9px;text-align:justify;text-align-last:justify;">機器名称</div>
<div class="j" style="position:absolute;left:929px;top:245.14318181818186px;font-size:6px;line-height:8px;color:#000;white-space:nowrap;letter-spacing:-0.15px;width:18.1px;text-align:justify;text-align-last:justify;">蛍光灯</div>
<div style="position:absolute;left:887px;top:255.39545454545456px;width:101px;height:12.104545454545455px;border-bottom:1px solid #f0f0f0;"></div>
<div style="position:absolute;left:927.5px;top:255.39545454545456px;width:0.7px;height:12.104545454545455px;background:#eeeeee;"></div>
<div style="position:absolute;left:967.5px;top:255.39545454545456px;width:0.7px;height:12.104545454545455px;background:#f2f2f2;"></div>
<div class="j" style="position:absolute;left:889px;top:257.2477272727273px;font-size:6px;line-height:8px;color:#000;white-space:nowrap;letter-spacing:-0.15px;width:23.9px;text-align:justify;text-align-last:justify;">機器略名</div>
<div class="j" style="position:absolute;left:929px;top:257.2477272727273px;font-size:6px;line-height:8px;color:#000;white-space:nowrap;letter-spacing:-0.15px;width:18.1px;text-align:justify;text-align-last:justify;">蛍光灯</div>
<div style="position:absolute;left:879px;top:267.5px;width:109px;height:10.6px;background:#dae4f0;"></div>
<div style="position:absolute;left:880.5px;top:271.0px;width:5.5px;height:3.5px;background:#e8edf3;border:0.7px solid #9aa6b8;"></div>
<div style="position:absolute;left:881.8px;top:272.5px;width:3px;height:0.7px;background:#555;"></div>
<div class="j" style="position:absolute;left:888px;top:267.7px;font-size:6px;line-height:8px;color:#222;white-space:nowrap;font-weight:bold;width:24.5px;text-align:justify;text-align-last:justify;">機能属性</div>
<div style="position:absolute;left:887px;top:278.1px;width:101px;height:12.299999999999992px;border-bottom:1px solid #f0f0f0;"></div>
<div style="position:absolute;left:927.5px;top:278.1px;width:0.7px;height:12.299999999999992px;background:#eeeeee;"></div>
<div style="position:absolute;left:967.5px;top:278.1px;width:0.7px;height:12.299999999999992px;background:#f2f2f2;"></div>
<div class="j" style="position:absolute;left:889px;top:280.05px;font-size:6px;line-height:8px;color:#000;white-space:nowrap;letter-spacing:-0.15px;width:12.2px;text-align:justify;text-align-last:justify;">電圧</div>
<div style="position:absolute;left:971px;top:280.05px;font-size:6px;line-height:8px;color:#333;white-space:nowrap;">V</div>
<div style="position:absolute;left:887px;top:290.40000000000003px;width:101px;height:12.299999999999992px;border-bottom:1px solid #f0f0f0;"></div>
<div style="position:absolute;left:927.5px;top:290.40000000000003px;width:0.7px;height:12.299999999999992px;background:#eeeeee;"></div>
<div style="position:absolute;left:967.5px;top:290.40000000000003px;width:0.7px;height:12.299999999999992px;background:#f2f2f2;"></div>
<div class="j" style="position:absolute;left:889px;top:292.35px;font-size:6px;line-height:8px;color:#000;white-space:nowrap;letter-spacing:-0.15px;width:29.8px;text-align:justify;text-align-last:justify;">電源周波数</div>
<div style="position:absolute;left:971px;top:292.35px;font-size:6px;line-height:8px;color:#333;white-space:nowrap;">Hz</div>
<div style="position:absolute;left:887px;top:302.7px;width:101px;height:12.299999999999992px;border-bottom:1px solid #f0f0f0;"></div>
<div style="position:absolute;left:927.5px;top:302.7px;width:0.7px;height:12.299999999999992px;background:#eeeeee;"></div>
<div style="position:absolute;left:967.5px;top:302.7px;width:0.7px;height:12.299999999999992px;background:#f2f2f2;"></div>
<div class="j" style="position:absolute;left:889px;top:304.65px;font-size:6px;line-height:8px;color:#000;white-space:nowrap;letter-spacing:-0.15px;width:23.9px;text-align:justify;text-align-last:justify;">消費電力</div>
<div style="position:absolute;left:971px;top:304.65px;font-size:6px;line-height:8px;color:#333;white-space:nowrap;">W</div>
<div style="position:absolute;left:879px;top:315.0px;width:109px;height:10.6px;background:#dae4f0;"></div>
<div style="position:absolute;left:880.5px;top:318.5px;width:5.5px;height:3.5px;background:#e8edf3;border:0.7px solid #9aa6b8;"></div>
<div style="position:absolute;left:881.8px;top:320.0px;width:3px;height:0.7px;background:#555;"></div>
<div class="j" style="position:absolute;left:888px;top:315.2px;font-size:6px;line-height:8px;color:#222;white-space:nowrap;font-weight:bold;width:24.5px;text-align:justify;text-align-last:justify;">機器属性</div>
<div style="position:absolute;left:887px;top:325.6px;width:101px;height:12.349999999999994px;border-bottom:1px solid #f0f0f0;"></div>
<div style="position:absolute;left:927.5px;top:325.6px;width:0.7px;height:12.349999999999994px;background:#eeeeee;"></div>
<div style="position:absolute;left:967.5px;top:325.6px;width:0.7px;height:12.349999999999994px;background:#f2f2f2;"></div>
<div class="j" style="position:absolute;left:889px;top:327.57500000000005px;font-size:6px;line-height:8px;color:#000;white-space:nowrap;letter-spacing:-0.15px;width:23.9px;text-align:justify;text-align-last:justify;">設置年月</div>
<div style="position:absolute;left:971px;top:327.57500000000005px;font-size:6px;line-height:8px;color:#333;white-space:nowrap;">-</div>
<div style="position:absolute;left:887px;top:337.95000000000005px;width:101px;height:12.349999999999994px;border-bottom:1px solid #f0f0f0;"></div>
<div style="position:absolute;left:927.5px;top:337.95000000000005px;width:0.7px;height:12.349999999999994px;background:#eeeeee;"></div>
<div style="position:absolute;left:967.5px;top:337.95000000000005px;width:0.7px;height:12.349999999999994px;background:#f2f2f2;"></div>
<div class="j" style="position:absolute;left:889px;top:339.92500000000007px;font-size:6px;line-height:8px;color:#000;white-space:nowrap;letter-spacing:-0.15px;width:23.9px;text-align:justify;text-align-last:justify;">製造年月</div>
<div style="position:absolute;left:971px;top:339.92500000000007px;font-size:6px;line-height:8px;color:#333;white-space:nowrap;">-</div>
<div style="position:absolute;left:887px;top:350.3px;width:101px;height:12.349999999999994px;border-bottom:1px solid #f0f0f0;"></div>
<div style="position:absolute;left:927.5px;top:350.3px;width:0.7px;height:12.349999999999994px;background:#eeeeee;"></div>
<div style="position:absolute;left:967.5px;top:350.3px;width:0.7px;height:12.349999999999994px;background:#f2f2f2;"></div>
<div class="j" style="position:absolute;left:889px;top:352.27500000000003px;font-size:6px;line-height:8px;color:#000;white-space:nowrap;letter-spacing:-0.15px;width:23.9px;text-align:justify;text-align-last:justify;">製造番号</div>
<div style="position:absolute;left:971px;top:352.27500000000003px;font-size:6px;line-height:8px;color:#333;white-space:nowrap;">-</div>
<div style="position:absolute;left:887px;top:362.65px;width:101px;height:12.349999999999994px;border-bottom:1px solid #f0f0f0;"></div>
<div style="position:absolute;left:927.5px;top:362.65px;width:0.7px;height:12.349999999999994px;background:#eeeeee;"></div>
<div style="position:absolute;left:967.5px;top:362.65px;width:0.7px;height:12.349999999999994px;background:#f2f2f2;"></div>
<div class="j" style="position:absolute;left:889px;top:364.625px;font-size:6px;line-height:8px;color:#000;white-space:nowrap;letter-spacing:-0.15px;width:12.2px;text-align:justify;text-align-last:justify;">備考</div>
<div style="position:absolute;left:971px;top:364.625px;font-size:6px;line-height:8px;color:#333;white-space:nowrap;">-</div>
<div style="position:absolute;left:879px;top:375.0px;width:109px;height:10.6px;background:#dae4f0;"></div>
<div style="position:absolute;left:880.5px;top:378.5px;width:5.5px;height:3.5px;background:#e8edf3;border:0.7px solid #9aa6b8;"></div>
<div style="position:absolute;left:881.8px;top:380.0px;width:3px;height:0.7px;background:#555;"></div>
<div class="j" style="position:absolute;left:888px;top:375.2px;font-size:6px;line-height:8px;color:#222;white-space:nowrap;font-weight:bold;width:49.2px;text-align:justify;text-align-last:justify;">端子1（ポート1）</div>
<div style="position:absolute;left:887px;top:385.6px;width:101px;height:12.219999999999999px;border-bottom:1px solid #f0f0f0;"></div>
<div style="position:absolute;left:927.5px;top:385.6px;width:0.7px;height:12.219999999999999px;background:#eeeeee;"></div>
<div style="position:absolute;left:967.5px;top:385.6px;width:0.7px;height:12.219999999999999px;background:#f2f2f2;"></div>
<div class="j" style="position:absolute;left:889px;top:387.51000000000005px;font-size:6px;line-height:8px;color:#000;white-space:nowrap;letter-spacing:-0.15px;width:35.6px;text-align:justify;text-align-last:justify;">ポート表示名</div>
<div class="j" style="position:absolute;left:929px;top:387.51000000000005px;font-size:6px;line-height:8px;color:#000;white-space:nowrap;letter-spacing:-0.15px;width:21.2px;text-align:justify;text-align-last:justify;">ポート1</div>
<div style="position:absolute;left:887px;top:397.82000000000005px;width:101px;height:12.219999999999999px;border-bottom:1px solid #f0f0f0;"></div>
<div style="position:absolute;left:927.5px;top:397.82000000000005px;width:0.7px;height:12.219999999999999px;background:#eeeeee;"></div>
<div style="position:absolute;left:967.5px;top:397.82000000000005px;width:0.7px;height:12.219999999999999px;background:#f2f2f2;"></div>
<div class="j" style="position:absolute;left:889px;top:399.7300000000001px;font-size:6px;line-height:8px;color:#000;white-space:nowrap;letter-spacing:-0.15px;width:29.8px;text-align:justify;text-align-last:justify;">ポート番号</div>
<div style="position:absolute;left:929px;top:399.7300000000001px;font-size:6px;line-height:8px;color:#000;white-space:nowrap;letter-spacing:-0.15px;">1</div>
<div style="position:absolute;left:887px;top:410.04px;width:101px;height:12.219999999999999px;border-bottom:1px solid #f0f0f0;"></div>
<div style="position:absolute;left:927.5px;top:410.04px;width:0.7px;height:12.219999999999999px;background:#eeeeee;"></div>
<div style="position:absolute;left:967.5px;top:410.04px;width:0.7px;height:12.219999999999999px;background:#f2f2f2;"></div>
<div class="j" style="position:absolute;left:889px;top:411.95000000000005px;font-size:6px;line-height:8px;color:#000;white-space:nowrap;letter-spacing:-0.15px;width:35.6px;text-align:justify;text-align-last:justify;">ポートタイプ</div>
<div style="position:absolute;left:887px;top:422.26px;width:101px;height:12.219999999999999px;border-bottom:1px solid #f0f0f0;"></div>
<div style="position:absolute;left:927.5px;top:422.26px;width:0.7px;height:12.219999999999999px;background:#eeeeee;"></div>
<div style="position:absolute;left:967.5px;top:422.26px;width:0.7px;height:12.219999999999999px;background:#f2f2f2;"></div>
<div class="j" style="position:absolute;left:889px;top:424.17px;font-size:6px;line-height:8px;color:#000;white-space:nowrap;letter-spacing:-0.15px;width:29.8px;text-align:justify;text-align-last:justify;">ポート名称</div>
<div class="j" style="position:absolute;left:929px;top:424.17px;font-size:6px;line-height:8px;color:#000;white-space:nowrap;letter-spacing:-0.15px;width:21.2px;text-align:justify;text-align-last:justify;">ポート1</div>
<div style="position:absolute;left:887px;top:434.48px;width:101px;height:12.219999999999999px;border-bottom:1px solid #f0f0f0;"></div>
<div style="position:absolute;left:927.5px;top:434.48px;width:0.7px;height:12.219999999999999px;background:#eeeeee;"></div>
<div style="position:absolute;left:967.5px;top:434.48px;width:0.7px;height:12.219999999999999px;background:#f2f2f2;"></div>
<div class="j" style="position:absolute;left:889px;top:436.39000000000004px;font-size:6px;line-height:8px;color:#000;white-space:nowrap;letter-spacing:-0.15px;width:29.8px;text-align:justify;text-align-last:justify;">ポート略称</div>
<div class="j" style="position:absolute;left:929px;top:436.39000000000004px;font-size:6px;line-height:8px;color:#000;white-space:nowrap;letter-spacing:-0.15px;width:21.2px;text-align:justify;text-align-last:justify;">ポート1</div>
<div style="position:absolute;left:887px;top:446.70000000000005px;width:101px;height:12.219999999999999px;border-bottom:1px solid #f0f0f0;"></div>
<div style="position:absolute;left:927.5px;top:446.70000000000005px;width:0.7px;height:12.219999999999999px;background:#eeeeee;"></div>
<div style="position:absolute;left:967.5px;top:446.70000000000005px;width:0.7px;height:12.219999999999999px;background:#f2f2f2;"></div>
<div class="j" style="position:absolute;left:889px;top:448.61000000000007px;font-size:6px;line-height:8px;color:#000;white-space:nowrap;letter-spacing:-0.15px;width:12.2px;text-align:justify;text-align-last:justify;">用途</div>
<div style="position:absolute;left:887px;top:458.92px;width:101px;height:12.219999999999999px;border-bottom:1px solid #f0f0f0;"></div>
<div style="position:absolute;left:927.5px;top:458.92px;width:0.7px;height:12.219999999999999px;background:#eeeeee;"></div>
<div style="position:absolute;left:967.5px;top:458.92px;width:0.7px;height:12.219999999999999px;background:#f2f2f2;"></div>
<div class="j" style="position:absolute;left:889px;top:460.83000000000004px;font-size:6px;line-height:8px;color:#000;white-space:nowrap;letter-spacing:-0.15px;width:35.6px;text-align:justify;text-align-last:justify;">コネクタ種別</div>
<div style="position:absolute;left:887px;top:471.14px;width:101px;height:12.219999999999999px;border-bottom:1px solid #f0f0f0;"></div>
<div style="position:absolute;left:927.5px;top:471.14px;width:0.7px;height:12.219999999999999px;background:#eeeeee;"></div>
<div style="position:absolute;left:967.5px;top:471.14px;width:0.7px;height:12.219999999999999px;background:#f2f2f2;"></div>
<div class="j" style="position:absolute;left:889px;top:473.05px;font-size:6px;line-height:8px;color:#000;white-space:nowrap;letter-spacing:-0.15px;width:35.6px;text-align:justify;text-align-last:justify;">コネクタ性別</div>
<div style="position:absolute;left:887px;top:483.36px;width:101px;height:12.219999999999999px;border-bottom:1px solid #f0f0f0;"></div>
<div style="position:absolute;left:927.5px;top:483.36px;width:0.7px;height:12.219999999999999px;background:#eeeeee;"></div>
<div style="position:absolute;left:967.5px;top:483.36px;width:0.7px;height:12.219999999999999px;background:#f2f2f2;"></div>
<div class="j" style="position:absolute;left:889px;top:485.27000000000004px;font-size:6px;line-height:8px;color:#000;white-space:nowrap;letter-spacing:-0.15px;width:23.9px;text-align:justify;text-align-last:justify;">直接接続</div>
<div class="j" style="position:absolute;left:929px;top:485.27000000000004px;font-size:6px;line-height:8px;color:#000;white-space:nowrap;letter-spacing:-0.15px;width:23.9px;text-align:justify;text-align-last:justify;">接続不可</div>
<div style="position:absolute;left:887px;top:495.58000000000004px;width:101px;height:12.219999999999999px;border-bottom:1px solid #f0f0f0;"></div>
<div style="position:absolute;left:927.5px;top:495.58000000000004px;width:0.7px;height:12.219999999999999px;background:#eeeeee;"></div>
<div style="position:absolute;left:967.5px;top:495.58000000000004px;width:0.7px;height:12.219999999999999px;background:#f2f2f2;"></div>
<div class="j" style="position:absolute;left:889px;top:497.49000000000007px;font-size:6px;line-height:8px;color:#000;white-space:nowrap;letter-spacing:-0.15px;width:35.6px;text-align:justify;text-align-last:justify;">対応サービス</div>
<div style="position:absolute;left:879px;top:507.8px;width:109px;height:10.6px;background:#dae4f0;"></div>
<div style="position:absolute;left:880.5px;top:511.3px;width:5.5px;height:3.5px;background:#e8edf3;border:0.7px solid #9aa6b8;"></div>
<div style="position:absolute;left:881.8px;top:512.8px;width:3px;height:0.7px;background:#555;"></div>
<div class="j" style="position:absolute;left:888px;top:508.0px;font-size:6px;line-height:8px;color:#222;white-space:nowrap;font-weight:bold;width:49.2px;text-align:justify;text-align-last:justify;">端子2（ポート2）</div>
<div style="position:absolute;left:887px;top:518.4px;width:101px;height:12.26px;border-bottom:1px solid #f0f0f0;"></div>
<div style="position:absolute;left:927.5px;top:518.4px;width:0.7px;height:12.26px;background:#eeeeee;"></div>
<div style="position:absolute;left:967.5px;top:518.4px;width:0.7px;height:12.26px;background:#f2f2f2;"></div>
<div class="j" style="position:absolute;left:889px;top:520.3299999999999px;font-size:6px;line-height:8px;color:#000;white-space:nowrap;letter-spacing:-0.15px;width:35.6px;text-align:justify;text-align-last:justify;">ポート表示名</div>
<div class="j" style="position:absolute;left:929px;top:520.3299999999999px;font-size:6px;line-height:8px;color:#000;white-space:nowrap;letter-spacing:-0.15px;width:21.2px;text-align:justify;text-align-last:justify;">ポート2</div>
<div style="position:absolute;left:887px;top:530.66px;width:101px;height:12.26px;border-bottom:1px solid #f0f0f0;"></div>
<div style="position:absolute;left:927.5px;top:530.66px;width:0.7px;height:12.26px;background:#eeeeee;"></div>
<div style="position:absolute;left:967.5px;top:530.66px;width:0.7px;height:12.26px;background:#f2f2f2;"></div>
<div class="j" style="position:absolute;left:889px;top:532.5899999999999px;font-size:6px;line-height:8px;color:#000;white-space:nowrap;letter-spacing:-0.15px;width:29.8px;text-align:justify;text-align-last:justify;">ポート番号</div>
<div style="position:absolute;left:929px;top:532.5899999999999px;font-size:6px;line-height:8px;color:#000;white-space:nowrap;letter-spacing:-0.15px;">2</div>
<div style="position:absolute;left:887px;top:542.92px;width:101px;height:12.26px;border-bottom:1px solid #f0f0f0;"></div>
<div style="position:absolute;left:927.5px;top:542.92px;width:0.7px;height:12.26px;background:#eeeeee;"></div>
<div style="position:absolute;left:967.5px;top:542.92px;width:0.7px;height:12.26px;background:#f2f2f2;"></div>
<div class="j" style="position:absolute;left:889px;top:544.8499999999999px;font-size:6px;line-height:8px;color:#000;white-space:nowrap;letter-spacing:-0.15px;width:35.6px;text-align:justify;text-align-last:justify;">ポートタイプ</div>
<div style="position:absolute;left:887px;top:555.18px;width:101px;height:12.26px;border-bottom:1px solid #f0f0f0;"></div>
<div style="position:absolute;left:927.5px;top:555.18px;width:0.7px;height:12.26px;background:#eeeeee;"></div>
<div style="position:absolute;left:967.5px;top:555.18px;width:0.7px;height:12.26px;background:#f2f2f2;"></div>
<div class="j" style="position:absolute;left:889px;top:557.1099999999999px;font-size:6px;line-height:8px;color:#000;white-space:nowrap;letter-spacing:-0.15px;width:29.8px;text-align:justify;text-align-last:justify;">ポート名称</div>
<div class="j" style="position:absolute;left:929px;top:557.1099999999999px;font-size:6px;line-height:8px;color:#000;white-space:nowrap;letter-spacing:-0.15px;width:21.2px;text-align:justify;text-align-last:justify;">ポート2</div>
<div style="position:absolute;left:887px;top:567.4399999999999px;width:101px;height:12.26px;border-bottom:1px solid #f0f0f0;"></div>
<div style="position:absolute;left:927.5px;top:567.4399999999999px;width:0.7px;height:12.26px;background:#eeeeee;"></div>
<div style="position:absolute;left:967.5px;top:567.4399999999999px;width:0.7px;height:12.26px;background:#f2f2f2;"></div>
<div class="j" style="position:absolute;left:889px;top:569.3699999999999px;font-size:6px;line-height:8px;color:#000;white-space:nowrap;letter-spacing:-0.15px;width:29.8px;text-align:justify;text-align-last:justify;">ポート略称</div>
<div class="j" style="position:absolute;left:929px;top:569.3699999999999px;font-size:6px;line-height:8px;color:#000;white-space:nowrap;letter-spacing:-0.15px;width:21.2px;text-align:justify;text-align-last:justify;">ポート2</div>
<div style="position:absolute;left:887px;top:579.6999999999999px;width:101px;height:12.26px;border-bottom:1px solid #f0f0f0;"></div>
<div style="position:absolute;left:927.5px;top:579.6999999999999px;width:0.7px;height:12.26px;background:#eeeeee;"></div>
<div style="position:absolute;left:967.5px;top:579.6999999999999px;width:0.7px;height:12.26px;background:#f2f2f2;"></div>
<div class="j" style="position:absolute;left:889px;top:581.6299999999999px;font-size:6px;line-height:8px;color:#000;white-space:nowrap;letter-spacing:-0.15px;width:12.2px;text-align:justify;text-align-last:justify;">用途</div>
<div style="position:absolute;left:887px;top:591.96px;width:101px;height:12.26px;border-bottom:1px solid #f0f0f0;"></div>
<div style="position:absolute;left:927.5px;top:591.96px;width:0.7px;height:12.26px;background:#eeeeee;"></div>
<div style="position:absolute;left:967.5px;top:591.96px;width:0.7px;height:12.26px;background:#f2f2f2;"></div>
<div class="j" style="position:absolute;left:889px;top:593.89px;font-size:6px;line-height:8px;color:#000;white-space:nowrap;letter-spacing:-0.15px;width:35.6px;text-align:justify;text-align-last:justify;">コネクタ種別</div>
<div style="position:absolute;left:887px;top:604.22px;width:101px;height:12.26px;border-bottom:1px solid #f0f0f0;"></div>
<div style="position:absolute;left:927.5px;top:604.22px;width:0.7px;height:12.26px;background:#eeeeee;"></div>
<div style="position:absolute;left:967.5px;top:604.22px;width:0.7px;height:12.26px;background:#f2f2f2;"></div>
<div class="j" style="position:absolute;left:889px;top:606.15px;font-size:6px;line-height:8px;color:#000;white-space:nowrap;letter-spacing:-0.15px;width:35.6px;text-align:justify;text-align-last:justify;">コネクタ性別</div>
<div style="position:absolute;left:887px;top:616.48px;width:101px;height:12.26px;border-bottom:1px solid #f0f0f0;"></div>
<div style="position:absolute;left:927.5px;top:616.48px;width:0.7px;height:12.26px;background:#eeeeee;"></div>
<div style="position:absolute;left:967.5px;top:616.48px;width:0.7px;height:12.26px;background:#f2f2f2;"></div>
<div class="j" style="position:absolute;left:889px;top:618.41px;font-size:6px;line-height:8px;color:#000;white-space:nowrap;letter-spacing:-0.15px;width:23.9px;text-align:justify;text-align-last:justify;">直接接続</div>
<div class="j" style="position:absolute;left:929px;top:618.41px;font-size:6px;line-height:8px;color:#000;white-space:nowrap;letter-spacing:-0.15px;width:23.9px;text-align:justify;text-align-last:justify;">接続不可</div>
<div style="position:absolute;left:988.5px;top:111.5px;width:8.5px;height:515px;background:#eaeaea;border-left:1px solid #d0d0d0;"></div>
<div style="position:absolute;left:989px;top:112px;width:7.5px;height:9px;background:#f8f8f8;"></div>
<div style="position:absolute;left:990px;top:111px;font-size:6px;line-height:8px;color:#666;white-space:nowrap;">▴</div>
<div style="position:absolute;left:990px;top:121px;width:5.5px;height:321px;background:#b5b5b5;"></div>
<div style="position:absolute;left:989px;top:616px;width:7.5px;height:9px;background:#f8f8f8;"></div>
<div style="position:absolute;left:990px;top:615px;font-size:6px;line-height:8px;color:#666;white-space:nowrap;">▾</div>
<div style="position:absolute;left:4px;top:625.5px;width:993px;height:11px;background:#e8dc7c;border-top:1px solid #d8d0a0;"></div>
<div style="position:absolute;left:892.5px;top:626px;font-size:7px;line-height:9px;color:#222;white-space:nowrap;font-family:"Liberation Mono",monospace;letter-spacing:-0.3px;">5339.48, 2619.64 mm&nbsp;&nbsp;110 %</div>
<svg style="position:absolute;left:0;top:0" width="1000" height="640" viewBox="0 0 1000 640"><path d="M162.5 200.5 H298.5 M386.5 200.5 H618.5 M706.5 200.5 H806.5 V487.5 H693.5 M639.5 487.5 H384.5 V478.5 M305.5 478.5 V487.5 H162.5 V200.5" fill="none" stroke="#cdcdcd" stroke-width="1"/><path d="M618.5 209.5 V200.5 H706.5 V209.5 M618.5 203.5 H706.5 M621.5 200.5 V203.5 M703.5 200.5 V203.5" fill="none" stroke="#cdcdcd" stroke-width="1.1"/><path d="M170.5 209.5 H241.5 V286.5 H250.5 V209.5 H298.5" fill="none" stroke="#cdcdcd" stroke-width="1"/><path d="M170.5 209.5 V403.5 H241.5 V326.5 H250.5 V478.5" fill="none" stroke="#cdcdcd" stroke-width="1"/><path d="M170.5 411.5 H250.5 M170.5 411.5 V478.5 H305.5" fill="none" stroke="#cdcdcd" stroke-width="1"/><path d="M386.5 209.5 H439.5 V348.5 H448.5 V209.5 H519.5 V478.5 H384.5" fill="none" stroke="#cdcdcd" stroke-width="1"/><path d="M439.5 387.5 H488.5 M439.5 387.5 V411.5 H519.5 M448.5 387.5 V403.5 H519.5" fill="none" stroke="#cdcdcd" stroke-width="1"/><path d="M448.1 348.4 A40.8 39.4 0 0 1 488.9 387.8" fill="none" stroke="#cdcdcd" stroke-width="0.9"/><path d="M528.5 209.5 H618.5 M706.5 209.5 H797.5 V478.5 H693.5 V487.5 M639.5 487.5 V478.5 H528.5 V209.5" fill="none" stroke="#cdcdcd" stroke-width="1"/><path d="M639.7 478.1 V539.7 M639.7 539.7 A54 59.5 0 0 0 693.75 480.2" fill="none" stroke="#cdcdcd" stroke-width="0.9"/><path d="M298.5 156.5 V253.5 M386.5 156.5 V253.5" fill="none" stroke="#cdcdcd" stroke-width="1"/><path d="M298.4 156.5 A44 44 0 0 1 342.5 200.5 M342.5 209.5 A44 44 0 0 1 298.4 253.5 M386.6 156.5 A44 44 0 0 0 342.5 200.5 M342.5 209.5 A44 44 0 0 0 386.6 253.5" fill="none" stroke="#cdcdcd" stroke-width="0.9"/><path d="M206.5 411.5 V478.5 M215.5 411.5 V478.5 M223.5 411.5 V478.5 M232.5 411.5 V478.5 M241.5 411.5 V478.5" fill="none" stroke="#cdcdcd" stroke-width="0.9"/><path d="M188.5 427.5 H250.5 M188.5 427.5 V462.5 H250.5 M206.5 443.5 H250.5 M206.5 446.5 H250.5" fill="none" stroke="#cdcdcd" stroke-width="0.9"/><path d="M244.5 424.5 L250.5 428.5 L244.5 432.5 Z" fill="none" stroke="#cdcdcd" stroke-width="0.8"/><circle cx="250" cy="462.5" r="1.6" fill="#d0d0d0"/><text x="173.5" y="471" font-size="6" fill="#aaaaaa" font-family="Liberation Sans">12 □□</text><text x="173.5" y="478" font-size="6" fill="#aaaaaa" font-family="Liberation Sans">22.2/20.0</text><path d="M265.5 473.5 H305.5 M384.5 473.5 H424.5" fill="none" stroke="#cdcdcd" stroke-width="0.9"/><path d="M313.5 473.7 H377" stroke="#aaa" stroke-width="0.8"/><path d="M313.5 473.7 l4 -1.2 v2.4 Z M377 473.7 l-4 -1.2 v2.4 Z" fill="#999"/><path d="M162.5 575.5 H802.5 V584.5 H162.5 Z" fill="none" stroke="#cdcdcd" stroke-width="1"/><path d="M286.5 198.5 V212.5 H398.5 V198.5" fill="none" stroke="#e6707e" stroke-width="1"/><path d="M398.5 198.5 L429.5 237.5 H440.5" fill="none" stroke="#e6707e" stroke-width="1"/><path d="M343.5 238.5 V360.5 M343.5 371.5 V496.5" fill="none" stroke="#e6707e" stroke-width="1"/><path d="M348.5 364.5 L405.5 349.5 H412.5" fill="none" stroke="#e6707e" stroke-width="1"/><path d="M306.5 274.5 V324.5 M306.5 335.5 V385.5 M383.5 274.5 V324.5 M383.5 335.5 V385.5 M312.5 329.5 H377.5 M388.5 329.5 H423.5" fill="none" stroke="#e6707e" stroke-width="1"/><path d="M203.5 275.5 V299.5 M203.5 310.5 V334.5 M182.5 305.5 H197.5" fill="none" stroke="#e6707e" stroke-width="1"/><path d="M208.5 304.5 H237.5 V278.5" fill="none" stroke="#e6707e" stroke-width="1"/><path d="M208.5 306.5 H219.5 V333.5 H230.5" fill="none" stroke="#e6707e" stroke-width="1"/><path d="M253.5 385.5 H176.5 V439.5" fill="none" stroke="#e6707e" stroke-width="1"/><path d="M262.5 382.5 L283.5 370.5 H293.5" fill="none" stroke="#e6707e" stroke-width="1"/><path d="M258.5 391.5 V398.5 H254.5 V406.5" fill="none" stroke="#e6707e" stroke-width="1"/><path d="M450.5 156.5 V197.5 M469.5 170.5 V197.5" fill="none" stroke="#e6707e" stroke-width="1"/><path d="M475.5 189.5 H493.5 V176.5 H510.5 V186.5" fill="none" stroke="#e6707e" stroke-width="1"/><path d="M475.5 195.5 H513.5 V317.5" fill="none" stroke="#e6707e" stroke-width="1"/><path d="M460.5 243.5 L498.5 248.5 H510.5" fill="none" stroke="#e6707e" stroke-width="1"/><path d="M483.5 268.5 V333.5" fill="none" stroke="#e6707e" stroke-width="1"/><path d="M460.5 309.5 H474.5" fill="none" stroke="#e6707e" stroke-width="1"/><path d="M454.5 339.5 H462.5" fill="none" stroke="#e6707e" stroke-width="1"/><path d="M487.5 335.5 L494.5 324.5 H504.5" fill="none" stroke="#e6707e" stroke-width="1"/><path d="M458.5 391.5 L469.5 380.5 H479.5" fill="none" stroke="#e6707e" stroke-width="1"/><path d="M493.5 388.5 L495.5 380.5 H519.5" fill="none" stroke="#e6707e" stroke-width="1"/><path d="M561.5 214.5 H764.5" fill="none" stroke="#e6707e" stroke-width="1"/><path d="M556.5 220.5 V359.5 M556.5 370.5 V451.5" fill="none" stroke="#e6707e" stroke-width="1"/><path d="M530.5 334.5 H586.5" fill="none" stroke="#e6707e" stroke-width="1"/><path d="M530.5 343.5 H537.5 L552.5 360.5" fill="none" stroke="#e6707e" stroke-width="1"/><path d="M530.5 354.5 H540.5 V420.5 M540.5 431.5 V512.5" fill="none" stroke="#e6707e" stroke-width="1"/><path d="M608.5 258.5 V330.5 M608.5 340.5 V406.5 M608.5 416.5 V474.5 H627.5" fill="none" stroke="#e6707e" stroke-width="1"/><path d="M720.5 258.5 V330.5 M720.5 340.5 V406.5" fill="none" stroke="#e6707e" stroke-width="1"/><path d="M629.5 335.5 H698.5" fill="none" stroke="#e6707e" stroke-width="1"/><path d="M656.5 257.5 L672.5 242.5 H785.5" fill="none" stroke="#e6707e" stroke-width="1"/><path d="M640.5 354.5 H648.5 L666.5 458.5" fill="none" stroke="#e6707e" stroke-width="1"/><path d="M757.5 176.5 L745.5 196.5 H735.5" fill="none" stroke="#e6707e" stroke-width="1"/><path d="M162.5 533.5 H806.5" fill="none" stroke="#e6707e" stroke-width="1"/><path d="M531.6 172.3 H843.1 V335" fill="none" stroke="#e6707e" stroke-width="1" stroke-dasharray="1.2 1"/><path d="M450.9 141 L445.1 146.4 H455.8 L450.4 152.4 V156" fill="none" stroke="#222" stroke-width="1.1"/><path d="M469.8 156.3 L464.5 161.7 H474.9 L469.3 167.7 V171" fill="none" stroke="#222" stroke-width="1.1"/><rect x="443.8" y="186.3" width="32.1" height="11.4" fill="none" stroke="#222" stroke-width="1.2"/><path d="M443.8 186.3 L475.9 197.7 M443.8 197.7 L475.9 186.3" stroke="#222" stroke-width="0.9"/><path d="M450.5 186.5 V197.5 M469.5 186.5 V197.5" fill="none" stroke="#e6707e" stroke-width="1"/><path d="M505.1 186.5 H516 M507 188.6 H514 M509 190.6 H512" stroke="#444" stroke-width="1"/><text x="448" y="137" font-size="6.6" text-anchor="start" fill="#4a64b4" font-family="Liberation Sans">1 φ 3W100/200V</text><text x="465" y="152.4" font-size="6.6" text-anchor="start" fill="#4a64b4" font-family="Liberation Sans">3 φ 3W200V</text><text x="479.9" y="188" font-size="6.6" text-anchor="start" fill="#4a64b4" font-family="Liberation Sans">P-L</text><circle cx="286.25" cy="193.9" r="5.4" fill="#fff" stroke="#222" stroke-width="1.1"/><path d="M281.282 196.06 L291.218 196.06 A5.4 5.4 0 0 1 281.282 196.06 Z" fill="#222"/><circle cx="398.5" cy="193.7" r="5.4" fill="#fff" stroke="#222" stroke-width="1.1"/><path d="M393.532 195.85999999999999 L403.468 195.85999999999999 A5.4 5.4 0 0 1 393.532 195.85999999999999 Z" fill="#222"/><circle cx="526" cy="172.1" r="5.0" fill="#fff" stroke="#222" stroke-width="2.3"/><circle cx="526" cy="172.1" r="5.0" fill="none" stroke="#888" stroke-width="0.5"/><circle cx="759.9" cy="172.1" r="5.0" fill="#fff" stroke="#222" stroke-width="2.3"/><circle cx="759.9" cy="172.1" r="5.0" fill="none" stroke="#888" stroke-width="0.5"/><circle cx="842.5" cy="340" r="5.0" fill="#fff" stroke="#222" stroke-width="2.3"/><circle cx="842.5" cy="340" r="5.0" fill="none" stroke="#888" stroke-width="0.5"/><rect x="321.5" y="230.5" width="43.0" height="6.0" fill="#fff" stroke="#444" stroke-width="1"/><circle cx="343.4" cy="233.2" r="5.0" fill="#fff" stroke="#222" stroke-width="1.2"/><path d="M343.4 233.2 L339.86499999999995 229.665 A5.0 5.0 0 0 1 346.935 229.665 Z M343.4 233.2 L339.86499999999995 236.73499999999999 A5.0 5.0 0 0 0 346.935 236.73499999999999 Z" fill="#222"/><rect x="462.5" y="260.5" width="43.0" height="6.0" fill="#fff" stroke="#444" stroke-width="1"/><circle cx="483.6" cy="263.6" r="5.0" fill="#fff" stroke="#222" stroke-width="1.2"/><rect x="462.5" y="336.5" width="43.0" height="6.0" fill="#fff" stroke="#444" stroke-width="1"/><circle cx="483.8" cy="339.3" r="5.0" fill="#fff" stroke="#222" stroke-width="1.2"/><rect x="586.5" y="250.5" width="43.0" height="6.0" fill="#fff" stroke="#444" stroke-width="1"/><circle cx="608.3" cy="253.2" r="5.0" fill="#fff" stroke="#222" stroke-width="1.2"/><rect x="698.5" y="250.5" width="43.0" height="6.0" fill="#fff" stroke="#444" stroke-width="1"/><circle cx="720.2" cy="253.2" r="5.0" fill="#fff" stroke="#222" stroke-width="1.2"/><rect x="586.5" y="332.5" width="43.0" height="6.0" fill="#fff" stroke="#444" stroke-width="1"/><circle cx="608.3" cy="335.2" r="5.0" fill="#fff" stroke="#222" stroke-width="1.2"/><rect x="698.5" y="332.5" width="43.0" height="6.0" fill="#fff" stroke="#444" stroke-width="1"/><circle cx="720.2" cy="335.2" r="5.0" fill="#fff" stroke="#222" stroke-width="1.2"/><rect x="586.5" y="408.5" width="43.0" height="6.0" fill="#fff" stroke="#444" stroke-width="1"/><circle cx="608.4" cy="411.6" r="5.0" fill="#fff" stroke="#222" stroke-width="1.2"/><rect x="698.5" y="408.5" width="43.0" height="6.0" fill="#fff" stroke="#444" stroke-width="1"/><circle cx="720.3" cy="411.6" r="5.0" fill="#fff" stroke="#222" stroke-width="1.2"/><rect x="644.5" y="460.5" width="43.0" height="6.0" fill="#fff" stroke="#444" stroke-width="1"/><circle cx="666.25" cy="463.1" r="5.0" fill="#fff" stroke="#222" stroke-width="1.2"/><path d="M666.25 463.1 L662.715 459.565 A5.0 5.0 0 0 1 669.785 459.565 Z M666.25 463.1 L662.715 466.63500000000005 A5.0 5.0 0 0 0 669.785 466.63500000000005 Z" fill="#222"/><rect x="321.5" y="499.5" width="43.0" height="7.0" fill="#fff" stroke="#444" stroke-width="1"/><circle cx="343.3" cy="503" r="5.0" fill="#fff" stroke="#222" stroke-width="1.2"/><path d="M343.3 503 L339.765 499.465 A5.0 5.0 0 0 1 346.83500000000004 499.465 Z M343.3 503 L339.765 506.535 A5.0 5.0 0 0 0 346.83500000000004 506.535 Z" fill="#222"/><rect x="200.5" y="232.5" width="6.0" height="43.0" fill="#fff" stroke="#444" stroke-width="1"/><circle cx="203.4" cy="253.9" r="5.0" fill="#fff" stroke="#222" stroke-width="1.2"/><rect x="174.5" y="283.5" width="6.0" height="43.0" fill="#fff" stroke="#444" stroke-width="1"/><circle cx="177.2" cy="305.2" r="5.0" fill="#fff" stroke="#222" stroke-width="1.2"/><path d="M175.7 300.45 A5.0 5.0 0 0 0 175.7 309.95 Q174.2 305.2 175.7 300.45 Z" fill="#222"/><rect x="200.5" y="334.5" width="6.0" height="43.0" fill="#fff" stroke="#444" stroke-width="1"/><circle cx="203.4" cy="356.1" r="5.0" fill="#fff" stroke="#222" stroke-width="1.2"/><rect x="200.5" y="512.5" width="6.0" height="43.0" fill="#fff" stroke="#444" stroke-width="1"/><circle cx="203.5" cy="533.6" r="5.0" fill="#fff" stroke="#222" stroke-width="1.2"/><rect x="368.5" y="512.5" width="6.0" height="43.0" fill="#fff" stroke="#444" stroke-width="1"/><circle cx="371.8" cy="533.6" r="5.0" fill="#fff" stroke="#222" stroke-width="1.2"/><rect x="537.5" y="512.5" width="6.0" height="42.0" fill="#fff" stroke="#444" stroke-width="1"/><circle cx="540.3" cy="533.5" r="5.0" fill="#fff" stroke="#222" stroke-width="1.2"/><rect x="710.5" y="512.5" width="6.0" height="43.0" fill="#fff" stroke="#444" stroke-width="1"/><circle cx="713.25" cy="533.7" r="5.0" fill="#fff" stroke="#222" stroke-width="1.2"/><circle cx="306.7" cy="268.9" r="5.5" fill="#fff" stroke="#222" stroke-width="1"/><text x="306.7" y="270.9" font-size="5.2" text-anchor="middle" fill="#222" font-family="Liberation Sans">DL</text><circle cx="383.1" cy="268.9" r="5.5" fill="#fff" stroke="#222" stroke-width="1"/><text x="383.1" y="270.9" font-size="5.2" text-anchor="middle" fill="#222" font-family="Liberation Sans">DL</text><circle cx="306.7" cy="329.9" r="5.5" fill="#fff" stroke="#222" stroke-width="1"/><text x="306.7" y="331.9" font-size="5.2" text-anchor="middle" fill="#222" font-family="Liberation Sans">DL</text><circle cx="383.1" cy="329.9" r="5.5" fill="#fff" stroke="#222" stroke-width="1"/><text x="383.1" y="331.9" font-size="5.2" text-anchor="middle" fill="#222" font-family="Liberation Sans">DL</text><circle cx="306.6" cy="390.9" r="5.5" fill="#fff" stroke="#222" stroke-width="1"/><text x="306.6" y="392.9" font-size="5.2" text-anchor="middle" fill="#222" font-family="Liberation Sans">DL</text><circle cx="383.1" cy="390.9" r="5.5" fill="#fff" stroke="#222" stroke-width="1"/><text x="383.1" y="392.9" font-size="5.2" text-anchor="middle" fill="#222" font-family="Liberation Sans">DL</text><circle cx="203.5" cy="305.2" r="5.5" fill="#fff" stroke="#222" stroke-width="1"/><path d="M198.00 304.97 L203.27 299.70 M198.78 308.02 L206.32 300.48 M200.68 309.92 L208.22 302.38 M203.73 310.70 L209.00 305.43 " stroke="#222" stroke-width="1"/><circle cx="343.3" cy="365.9" r="5.5" fill="#fff" stroke="#222" stroke-width="1"/><path d="M337.80 365.67 L343.07 360.40 M338.58 368.72 L346.12 361.18 M340.48 370.62 L348.02 363.08 M343.53 371.40 L348.80 366.13 " stroke="#222" stroke-width="1"/><circle cx="258.7" cy="385.9" r="5.5" fill="#fff" stroke="#222" stroke-width="1"/><path d="M253.20 385.67 L258.47 380.40 M253.98 388.72 L261.52 381.18 M255.88 390.62 L263.42 383.08 M258.93 391.40 L264.20 386.13 " stroke="#222" stroke-width="1"/><circle cx="491.9" cy="394.5" r="5.5" fill="#fff" stroke="#222" stroke-width="1"/><path d="M486.40 394.27 L491.67 389.00 M487.18 397.32 L494.72 389.78 M489.08 399.22 L496.62 391.68 M492.13 400.00 L497.40 394.73 " stroke="#222" stroke-width="1"/><circle cx="556.7" cy="365.2" r="5.5" fill="#fff" stroke="#222" stroke-width="1"/><path d="M551.20 364.97 L556.47 359.70 M551.98 368.02 L559.52 360.48 M553.88 369.92 L561.42 362.38 M556.93 370.70 L562.20 365.43 " stroke="#222" stroke-width="1"/><circle cx="540.3" cy="426.3" r="5.5" fill="#fff" stroke="#222" stroke-width="1"/><path d="M534.80 426.07 L540.07 420.80 M535.58 429.12 L543.12 421.58 M537.48 431.02 L545.02 423.48 M540.53 431.80 L545.80 426.53 " stroke="#222" stroke-width="1"/><circle cx="237.8" cy="275.9" r="2.9" fill="#222"/><circle cx="254" cy="408.6" r="2.9" fill="#222"/><circle cx="451.9" cy="339.3" r="2.9" fill="#222"/><circle cx="630.3" cy="475" r="2.9" fill="#222"/><circle cx="235.3" cy="333.7" r="5.4" fill="#fff" stroke="#222" stroke-width="1.1"/><path d="M230.44 332.3 H240.16000000000003 M230.44 335.09999999999997 H240.16000000000003" stroke="#222" stroke-width="1"/><path d="M237.73000000000002 328.894 A5.4 5.4 0 0 1 237.73000000000002 338.506 Z" fill="#222"/><circle cx="454.7" cy="243.4" r="5.4" fill="#fff" stroke="#222" stroke-width="1.1"/><path d="M449.84 242.0 H459.56 M449.84 244.8 H459.56" stroke="#222" stroke-width="1"/><path d="M452.27 238.594 A5.4 5.4 0 0 0 452.27 248.20600000000002 Z" fill="#222"/><circle cx="434.3" cy="395.6" r="5.4" fill="#fff" stroke="#222" stroke-width="1.1"/><path d="M429.44 394.20000000000005 H439.16 M429.44 397.0 H439.16" stroke="#222" stroke-width="1"/><path d="M436.73 390.79400000000004 A5.4 5.4 0 0 1 436.73 400.406 Z M431.87 390.79400000000004 A5.4 5.4 0 0 0 431.87 400.406 Z" fill="#222"/><circle cx="454.4" cy="395.6" r="5.4" fill="#fff" stroke="#222" stroke-width="1.1"/><path d="M449.53999999999996 394.20000000000005 H459.26 M449.53999999999996 397.0 H459.26" stroke="#222" stroke-width="1"/><path d="M451.96999999999997 390.79400000000004 A5.4 5.4 0 0 0 451.96999999999997 400.406 Z" fill="#222"/><circle cx="556.6" cy="214.6" r="5.4" fill="#fff" stroke="#222" stroke-width="1.1"/><path d="M555.2 209.73999999999998 V219.46 M558.0 209.73999999999998 V219.46" stroke="#222" stroke-width="1"/><path d="M551.794 212.17 A5.4 5.4 0 0 1 561.4060000000001 212.17 Z" fill="#222"/><circle cx="769.5" cy="214.5" r="5.4" fill="#fff" stroke="#222" stroke-width="1.1"/><path d="M768.1 209.64 V219.36 M770.9 209.64 V219.36" stroke="#222" stroke-width="1"/><path d="M764.694 212.07 A5.4 5.4 0 0 1 774.306 212.07 Z" fill="#222"/><circle cx="790.6" cy="241.4" r="5.4" fill="#fff" stroke="#222" stroke-width="1.1"/><path d="M785.74 240.0 H795.46 M785.74 242.8 H795.46" stroke="#222" stroke-width="1"/><path d="M793.03 236.594 A5.4 5.4 0 0 1 793.03 246.20600000000002 Z" fill="#222"/><circle cx="556.3" cy="470.9" r="5.4" fill="#fff" stroke="#222" stroke-width="1.1"/><path d="M554.9 466.03999999999996 V475.76 M557.6999999999999 466.03999999999996 V475.76" stroke="#222" stroke-width="1"/><path d="M551.4939999999999 473.33 A5.4 5.4 0 0 0 561.106 473.33 Z" fill="#222"/><circle cx="177.4" cy="445.2" r="5.4" fill="#fff" stroke="#222" stroke-width="1.1"/><path d="M177.4 439.8 A5.4 5.4 0 0 0 177.4 450.59999999999997 Z" fill="#222"/><path d="M781 238.5 H784 M781 241.2 H784 M781 243.9 H784 M784 238.5 V243.9" stroke="#222" stroke-width="0.8" fill="none"/><circle cx="454.8" cy="309.7" r="5.4" fill="#fff" stroke="#222" stroke-width="1"/><path d="M454.8 304.5 V314.9 M450.3 307.1 L459.3 312.3 M450.3 312.3 L459.3 307.1" stroke="#222" stroke-width="0.8"/><path d="M450.86 217.32 L445.66 222.23" stroke="#222" stroke-width="1.1"/><path d="M443.84 223.94 L448.48 222.31 L445.74 219.40 Z" fill="#222"/><circle cx="452.9" cy="215.4" r="2.8" fill="#fff" stroke="#222" stroke-width="1"/><path d="M462.97 217.33 L457.85 222.22" stroke="#222" stroke-width="1.1"/><path d="M456.04 223.95 L460.68 222.29 L457.91 219.39 Z" fill="#222"/><circle cx="465" cy="215.4" r="2.8" fill="#fff" stroke="#222" stroke-width="1"/><path d="M245.62 417.08 L240.81 421.89" stroke="#222" stroke-width="1.1"/><path d="M239.05 423.65 L243.64 421.89 L240.81 419.06 Z" fill="#222"/><circle cx="247.6" cy="415.1" r="2.8" fill="#fff" stroke="#222" stroke-width="1"/><path d="M483.96 403.71 L479.61 408.69" stroke="#222" stroke-width="1.1"/><path d="M477.97 410.58 L482.44 408.50 L479.42 405.87 Z" fill="#222"/><circle cx="485.8" cy="401.6" r="2.8" fill="#fff" stroke="#222" stroke-width="1"/><rect x="508.5" y="317.4" width="10.8" height="31.9" fill="#fff" stroke="#222" stroke-width="1.1"/><path d="M508.5 317.4 H519.3 V349.3 Z" fill="#222"/><path d="M510.5 355.5 H514 V362.5 M514 360 L516 362.5" fill="none" stroke="#6a80c0" stroke-width="0.8"/><rect x="584.4" y="245.8" width="47.3" height="15.7" fill="none" stroke="#5a6cc4" stroke-width="1"/><rect x="585.5" y="246.9" width="2" height="2" fill="#556"/><rect x="629.3" y="246.9" width="2" height="2" fill="#556"/><rect x="585.5" y="258.6" width="2" height="2" fill="#556"/><rect x="629.3" y="258.6" width="2" height="2" fill="#556"/><circle cx="608.4" cy="242" r="2" fill="#fff" stroke="#e6707e" stroke-width="0.9"/><rect x="430.5" y="229.5" width="7.0" height="7.0" fill="#f4f6fc" stroke="#777" stroke-width="0.9"/><text x="434.1" y="235.0" font-size="6" text-anchor="middle" fill="#777" font-family="Liberation Sans">k</text><rect x="284.5" y="361.5" width="8.0" height="7.0" fill="#f4f6fc" stroke="#4a64b4" stroke-width="0.9"/><text x="288.7" y="367.7" font-size="6" text-anchor="middle" fill="#4a64b4" font-family="Liberation Sans">c</text><rect x="414.5" y="321.5" width="7.0" height="7.0" fill="#f4f6fc" stroke="#4a64b4" stroke-width="0.9"/><text x="418.15" y="327.0" font-size="6" text-anchor="middle" fill="#4a64b4" font-family="Liberation Sans">i</text><rect x="404.5" y="342.5" width="7.0" height="7.0" fill="#f4f6fc" stroke="#4a64b4" stroke-width="0.9"/><text x="408.15" y="348.3" font-size="6" text-anchor="middle" fill="#4a64b4" font-family="Liberation Sans">a</text><rect x="500.5" y="240.5" width="8.0" height="7.0" fill="#f4f6fc" stroke="#4a64b4" stroke-width="0.9"/><text x="504.6" y="246.0" font-size="6" text-anchor="middle" fill="#4a64b4" font-family="Liberation Sans">h</text><rect x="496.5" y="316.5" width="8.0" height="7.0" fill="#f4f6fc" stroke="#4a64b4" stroke-width="0.9"/><text x="500.0" y="322.2" font-size="6" text-anchor="middle" fill="#4a64b4" font-family="Liberation Sans">d</text><rect x="531.5" y="327.5" width="8.0" height="6.0" fill="#f4f6fc" stroke="#4a64b4" stroke-width="0.9"/><text x="535.55" y="332.3" font-size="6" text-anchor="middle" fill="#4a64b4" font-family="Liberation Sans">e</text><rect x="531.5" y="336.5" width="8.0" height="7.0" fill="#f4f6fc" stroke="#4a64b4" stroke-width="0.9"/><text x="535.55" y="341.9" font-size="6" text-anchor="middle" fill="#4a64b4" font-family="Liberation Sans">i</text><rect x="531.5" y="346.5" width="8.0" height="6.0" fill="#f4f6fc" stroke="#4a64b4" stroke-width="0.9"/><text x="535.55" y="351.59999999999997" font-size="6" text-anchor="middle" fill="#4a64b4" font-family="Liberation Sans">f</text><rect x="470.5" y="372.5" width="9.0" height="7.0" fill="#f4f6fc" stroke="#4a64b4" stroke-width="0.9"/><text x="474.65" y="378.59999999999997" font-size="6" text-anchor="middle" fill="#4a64b4" font-family="Liberation Sans">h</text><rect x="495.5" y="372.5" width="8.0" height="7.0" fill="#f4f6fc" stroke="#4a64b4" stroke-width="0.9"/><text x="499.45" y="378.59999999999997" font-size="6" text-anchor="middle" fill="#4a64b4" font-family="Liberation Sans">b</text><rect x="504.5" y="372.5" width="8.0" height="7.0" fill="#f4f6fc" stroke="#4a64b4" stroke-width="0.9"/><text x="508.0" y="378.59999999999997" font-size="6" text-anchor="middle" fill="#4a64b4" font-family="Liberation Sans">g</text><rect x="512.5" y="372.5" width="8.0" height="7.0" fill="#f4f6fc" stroke="#4a64b4" stroke-width="0.9"/><text x="516.4" y="378.59999999999997" font-size="6" text-anchor="middle" fill="#4a64b4" font-family="Liberation Sans">i</text><rect x="648.5" y="248.5" width="9.0" height="8.0" fill="#f4f6fc" stroke="#4a64b4" stroke-width="0.9"/><text x="653.0" y="255.5" font-size="6" text-anchor="middle" fill="#4a64b4" font-family="Liberation Sans">m</text><rect x="640.5" y="348.5" width="8.0" height="6.0" fill="#f4f6fc" stroke="#4a64b4" stroke-width="0.9"/><text x="644.8" y="353.3" font-size="6" text-anchor="middle" fill="#4a64b4" font-family="Liberation Sans">a</text><rect x="735.5" y="188.5" width="9.0" height="8.0" fill="#f4f6fc" stroke="#4a64b4" stroke-width="0.9"/><text x="739.75" y="194.7" font-size="6" text-anchor="middle" fill="#4a64b4" font-family="Liberation Sans">n</text><rect x="471.4" y="223.55" width="21" height="7.5" fill="#eeeeee" stroke="#d0d0d0" stroke-width="0.7"/><text x="481.9" y="229.60000000000002" font-size="6" text-anchor="middle" fill="#8a8a8a" font-family="Liberation Sans" textLength="17.5" lengthAdjust="spacing">管理室</text><rect x="297.25" y="434.05" width="19.5" height="7.5" fill="#eeeeee" stroke="#d0d0d0" stroke-width="0.7"/><text x="307" y="440.1" font-size="6" text-anchor="middle" fill="#8a8a8a" font-family="Liberation Sans" textLength="16.5" lengthAdjust="spacing">ホール</text><rect x="651.6" y="288.85" width="20" height="7.5" fill="#eeeeee" stroke="#d0d0d0" stroke-width="0.7"/><text x="661.6" y="294.90000000000003" font-size="6" text-anchor="middle" fill="#8a8a8a" font-family="Liberation Sans" textLength="17" lengthAdjust="spacing">集会所</text><rect x="467.5" y="560.45" width="27" height="7.5" fill="#eeeeee" stroke="#d0d0d0" stroke-width="0.7"/><text x="481" y="566.5" font-size="6" text-anchor="middle" fill="#8a8a8a" font-family="Liberation Sans" textLength="23" lengthAdjust="spacing">共用廊下</text><text x="608.2" y="296" font-size="6.6" text-anchor="middle" fill="#4a64b4" font-family="Liberation Sans">VVF1.6</text><text x="665.8" y="332.2" font-size="6.6" text-anchor="middle" fill="#4a64b4" font-family="Liberation Sans">VVF1.6</text><text x="608.2" y="376" font-size="6.6" text-anchor="middle" fill="#4a64b4" font-family="Liberation Sans">VVF1.6</text><text x="595.9" y="437.4" font-size="6.6" text-anchor="middle" fill="#4a64b4" font-family="Liberation Sans">VVF1.6</text><text x="754.4" y="251.8" font-size="6.6" text-anchor="start" fill="#4a64b4" font-family="Liberation Sans">20A250V</text><text x="0" y="0" font-size="6.8" fill="#333" font-family="Liberation Sans" transform="translate(561.4 465.3) rotate(-90)">EET</text><path d="M556.6 451.3 V453" stroke="#333" stroke-width="1"/></svg>
</body></html>
